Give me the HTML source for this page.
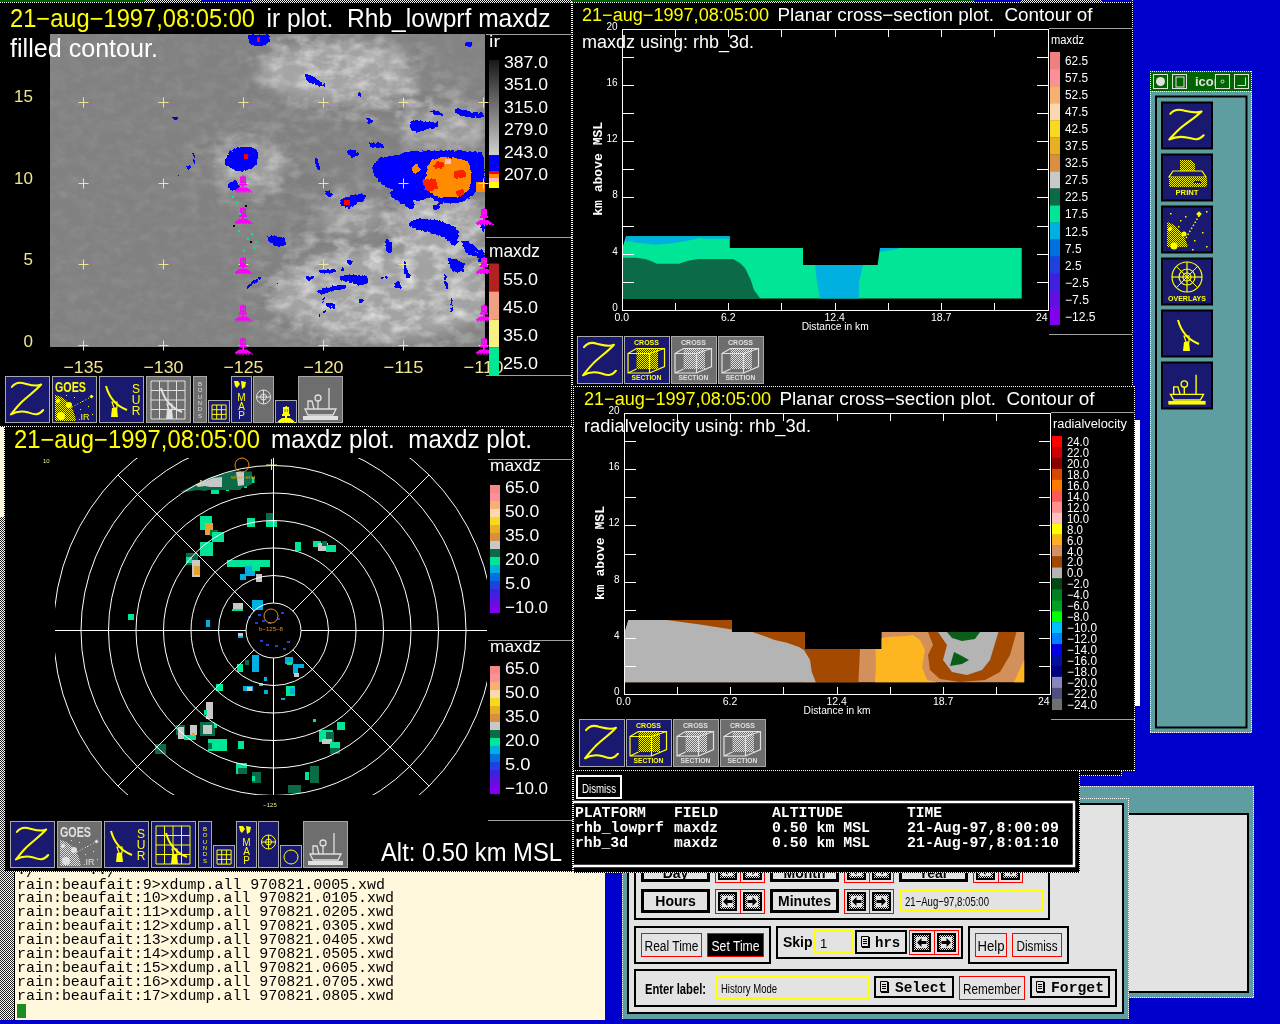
<!DOCTYPE html><html><head><meta charset="utf-8"><style>html,body{margin:0;padding:0;background:#0000cd;overflow:hidden;width:1280px;height:1024px}svg{display:block;will-change:transform} text{white-space:pre}</style></head><body>
<svg xml:space="preserve" width="1280" height="1024" viewBox="0 0 1280 1024">
<defs><filter id="blur4" x="-50%" y="-50%" width="200%" height="200%"><feGaussianBlur stdDeviation="6"/></filter><filter id="blur2" x="-50%" y="-50%" width="200%" height="200%"><feGaussianBlur stdDeviation="2.5"/></filter><clipPath id="satclip"><rect x="50" y="34" width="435" height="313"/></clipPath><clipPath id="radclip"><rect x="55" y="458" width="432" height="337"/></clipPath><pattern id="stip" width="2" height="2" patternUnits="userSpaceOnUse"><rect width="2" height="2" fill="#fff8dc"/><rect width="1" height="1" fill="#202020"/><rect x="1" y="1" width="1" height="1" fill="#202020"/></pattern><pattern id="dith" width="2" height="2" patternUnits="userSpaceOnUse"><rect width="2" height="2" fill="#191970"/><rect width="1" height="1" fill="#ffff00"/><rect x="1" y="1" width="1" height="1" fill="#ffff00"/></pattern><pattern id="dithg" width="2" height="2" patternUnits="userSpaceOnUse"><rect width="2" height="2" fill="#6e6e6e"/><rect width="1" height="1" fill="#e0e0e0"/><rect x="1" y="1" width="1" height="1" fill="#e0e0e0"/></pattern><pattern id="chk" width="2" height="2" patternUnits="userSpaceOnUse"><rect width="2" height="2" fill="#000"/><rect width="1" height="1" fill="#fff"/><rect x="1" y="1" width="1" height="1" fill="#fff"/></pattern><pattern id="btnstip" width="2" height="2" patternUnits="userSpaceOnUse"><rect width="2" height="2" fill="#e3e3e3"/><rect width="1" height="1" fill="#000"/><rect x="1" y="1" width="1" height="1" fill="#000"/></pattern></defs>
<rect x="0" y="0" width="1280" height="1024" fill="#0000cd" />
<rect x="0" y="427" width="605" height="594" fill="#fff8dc" />
<rect x="0" y="427" width="14" height="594" fill="url(#stip)" />
<rect x="0" y="427" width="13" height="90" fill="#fff8dc" />
<rect x="14" y="872" width="1" height="149" fill="#000" />
<text x="17" y="888.5" font-family="Liberation Mono" font-size="15" fill="#000" font-weight="normal" text-anchor="start" textLength="368" lengthAdjust="spacingAndGlyphs" >rain:beaufait:9&gt;xdump.all 970821.0005.xwd</text>
<text x="17" y="902.4" font-family="Liberation Mono" font-size="15" fill="#000" font-weight="normal" text-anchor="start" textLength="377" lengthAdjust="spacingAndGlyphs" >rain:beaufait:10&gt;xdump.all 970821.0105.xwd</text>
<text x="17" y="916.3" font-family="Liberation Mono" font-size="15" fill="#000" font-weight="normal" text-anchor="start" textLength="377" lengthAdjust="spacingAndGlyphs" >rain:beaufait:11&gt;xdump.all 970821.0205.xwd</text>
<text x="17" y="930.2" font-family="Liberation Mono" font-size="15" fill="#000" font-weight="normal" text-anchor="start" textLength="377" lengthAdjust="spacingAndGlyphs" >rain:beaufait:12&gt;xdump.all 970821.0305.xwd</text>
<text x="17" y="944.1" font-family="Liberation Mono" font-size="15" fill="#000" font-weight="normal" text-anchor="start" textLength="377" lengthAdjust="spacingAndGlyphs" >rain:beaufait:13&gt;xdump.all 970821.0405.xwd</text>
<text x="17" y="958.0" font-family="Liberation Mono" font-size="15" fill="#000" font-weight="normal" text-anchor="start" textLength="377" lengthAdjust="spacingAndGlyphs" >rain:beaufait:14&gt;xdump.all 970821.0505.xwd</text>
<text x="17" y="971.9" font-family="Liberation Mono" font-size="15" fill="#000" font-weight="normal" text-anchor="start" textLength="377" lengthAdjust="spacingAndGlyphs" >rain:beaufait:15&gt;xdump.all 970821.0605.xwd</text>
<text x="17" y="985.8" font-family="Liberation Mono" font-size="15" fill="#000" font-weight="normal" text-anchor="start" textLength="377" lengthAdjust="spacingAndGlyphs" >rain:beaufait:16&gt;xdump.all 970821.0705.xwd</text>
<text x="17" y="999.7" font-family="Liberation Mono" font-size="15" fill="#000" font-weight="normal" text-anchor="start" textLength="377" lengthAdjust="spacingAndGlyphs" >rain:beaufait:17&gt;xdump.all 970821.0805.xwd</text>
<text x="17" y="877" font-family="Liberation Mono" font-size="15" fill="#000" font-weight="normal" text-anchor="start" >·/      ··/</text>
<rect x="17" y="1004" width="9" height="14" fill="#1e8c1e" />
<rect x="0" y="1020" width="1280" height="4" fill="#0000cd" />
<rect x="1060" y="786" width="194" height="212" fill="#5f9ea0" />
<line x1="1060" y1="786.5" x2="1254" y2="786.5" stroke="#fff" stroke-width="1" stroke-dasharray="1 1" shape-rendering="crispEdges"/>
<line x1="1253.5" y1="786" x2="1253.5" y2="998" stroke="#fff" stroke-width="1" stroke-dasharray="1 1" shape-rendering="crispEdges"/>
<line x1="1060" y1="997.5" x2="1254" y2="997.5" stroke="#fff" stroke-width="1" stroke-dasharray="1 1" shape-rendering="crispEdges"/>
<rect x="1060" y="813" width="189" height="180" fill="#000" />
<rect x="1060" y="815" width="187" height="176" fill="#e3e3e3" />
<rect x="622" y="798" width="507" height="221" fill="#5f9ea0" />
<line x1="622" y1="798.5" x2="1129" y2="798.5" stroke="#fff" stroke-width="1" stroke-dasharray="1 1" shape-rendering="crispEdges"/>
<line x1="1128.5" y1="798" x2="1128.5" y2="1019" stroke="#fff" stroke-width="1" stroke-dasharray="1 1" shape-rendering="crispEdges"/>
<line x1="622.5" y1="798" x2="622.5" y2="1019" stroke="#fff" stroke-width="1" stroke-dasharray="1 1" shape-rendering="crispEdges"/>
<rect x="627" y="803" width="497" height="211" fill="#000" />
<rect x="629" y="805" width="493" height="207" fill="#e3e3e3" />
<rect x="634" y="830" width="416" height="90" fill="#000" />
<rect x="636" y="832" width="412" height="86" fill="#e3e3e3" />
<rect x="641" y="862" width="69" height="20" fill="#000" />
<rect x="644" y="865" width="63" height="14" fill="#e3e3e3" />
<text x="675.5" y="878" font-family="Liberation Sans" font-size="14" fill="#000" font-weight="bold" text-anchor="middle" >Day</text>
<rect x="715.5" y="858.5" width="49" height="24" fill="none" stroke="#ff0000" stroke-width="1"/>
<rect x="740.5" y="858.5" width="24" height="24" fill="none" stroke="#ff0000" stroke-width="1"/>
<rect x="718" y="861" width="19" height="19" fill="#000" />
<rect x="720" y="863" width="15" height="15" fill="url(#btnstip)" />
<rect x="722" y="865" width="11" height="11" fill="#e3e3e3" />
<path d="M723,870.5 l4.5,-4.5 l0,3 l5,0 l0,3 l-5,0 l0,3 Z" fill="#000"/>
<rect x="743" y="861" width="19" height="19" fill="#000" />
<rect x="745" y="863" width="15" height="15" fill="url(#btnstip)" />
<rect x="747" y="865" width="11" height="11" fill="#e3e3e3" />
<path d="M757,870.5 l-4.5,-4.5 l0,3 l-5,0 l0,3 l5,0 l0,3 Z" fill="#000"/>
<rect x="770" y="862" width="69" height="20" fill="#000" />
<rect x="773" y="865" width="63" height="14" fill="#e3e3e3" />
<text x="804.5" y="878" font-family="Liberation Sans" font-size="14" fill="#000" font-weight="bold" text-anchor="middle" >Month</text>
<rect x="844.5" y="858.5" width="49" height="24" fill="none" stroke="#ff0000" stroke-width="1"/>
<rect x="869.5" y="858.5" width="24" height="24" fill="none" stroke="#ff0000" stroke-width="1"/>
<rect x="847" y="861" width="19" height="19" fill="#000" />
<rect x="849" y="863" width="15" height="15" fill="url(#btnstip)" />
<rect x="851" y="865" width="11" height="11" fill="#e3e3e3" />
<path d="M852,870.5 l4.5,-4.5 l0,3 l5,0 l0,3 l-5,0 l0,3 Z" fill="#000"/>
<rect x="872" y="861" width="19" height="19" fill="#000" />
<rect x="874" y="863" width="15" height="15" fill="url(#btnstip)" />
<rect x="876" y="865" width="11" height="11" fill="#e3e3e3" />
<path d="M886,870.5 l-4.5,-4.5 l0,3 l-5,0 l0,3 l5,0 l0,3 Z" fill="#000"/>
<rect x="899" y="862" width="69" height="20" fill="#000" />
<rect x="902" y="865" width="63" height="14" fill="#e3e3e3" />
<text x="933.5" y="878" font-family="Liberation Sans" font-size="14" fill="#000" font-weight="bold" text-anchor="middle" >Year</text>
<rect x="973.5" y="858.5" width="49" height="24" fill="none" stroke="#ff0000" stroke-width="1"/>
<rect x="998.5" y="858.5" width="24" height="24" fill="none" stroke="#ff0000" stroke-width="1"/>
<rect x="976" y="861" width="19" height="19" fill="#000" />
<rect x="978" y="863" width="15" height="15" fill="url(#btnstip)" />
<rect x="980" y="865" width="11" height="11" fill="#e3e3e3" />
<path d="M981,870.5 l4.5,-4.5 l0,3 l5,0 l0,3 l-5,0 l0,3 Z" fill="#000"/>
<rect x="1001" y="861" width="19" height="19" fill="#000" />
<rect x="1003" y="863" width="15" height="15" fill="url(#btnstip)" />
<rect x="1005" y="865" width="11" height="11" fill="#e3e3e3" />
<path d="M1015,870.5 l-4.5,-4.5 l0,3 l-5,0 l0,3 l5,0 l0,3 Z" fill="#000"/>
<rect x="641" y="889" width="69" height="24" fill="#000" />
<rect x="644" y="892" width="63" height="18" fill="#e3e3e3" />
<text x="675.5" y="906" font-family="Liberation Sans" font-size="14" fill="#000" font-weight="bold" text-anchor="middle" >Hours</text>
<rect x="715.5" y="889.5" width="49" height="24" fill="none" stroke="#ff0000" stroke-width="1"/>
<rect x="740.5" y="889.5" width="24" height="24" fill="none" stroke="#ff0000" stroke-width="1"/>
<rect x="718" y="892" width="19" height="19" fill="#000" />
<rect x="720" y="894" width="15" height="15" fill="url(#btnstip)" />
<rect x="722" y="896" width="11" height="11" fill="#e3e3e3" />
<path d="M723,901.5 l4.5,-4.5 l0,3 l5,0 l0,3 l-5,0 l0,3 Z" fill="#000"/>
<rect x="743" y="892" width="19" height="19" fill="#000" />
<rect x="745" y="894" width="15" height="15" fill="url(#btnstip)" />
<rect x="747" y="896" width="11" height="11" fill="#e3e3e3" />
<path d="M757,901.5 l-4.5,-4.5 l0,3 l-5,0 l0,3 l5,0 l0,3 Z" fill="#000"/>
<rect x="770" y="889" width="69" height="24" fill="#000" />
<rect x="773" y="892" width="63" height="18" fill="#e3e3e3" />
<text x="804.5" y="906" font-family="Liberation Sans" font-size="14" fill="#000" font-weight="bold" text-anchor="middle" >Minutes</text>
<rect x="844.5" y="889.5" width="49" height="24" fill="none" stroke="#ff0000" stroke-width="1"/>
<rect x="869.5" y="889.5" width="24" height="24" fill="none" stroke="#ff0000" stroke-width="1"/>
<rect x="847" y="892" width="19" height="19" fill="#000" />
<rect x="849" y="894" width="15" height="15" fill="url(#btnstip)" />
<rect x="851" y="896" width="11" height="11" fill="#e3e3e3" />
<path d="M852,901.5 l4.5,-4.5 l0,3 l5,0 l0,3 l-5,0 l0,3 Z" fill="#000"/>
<rect x="872" y="892" width="19" height="19" fill="#000" />
<rect x="874" y="894" width="15" height="15" fill="url(#btnstip)" />
<rect x="876" y="896" width="11" height="11" fill="#e3e3e3" />
<path d="M886,901.5 l-4.5,-4.5 l0,3 l-5,0 l0,3 l5,0 l0,3 Z" fill="#000"/>
<rect x="899" y="889" width="144" height="23" fill="#ffff00" />
<rect x="901" y="891" width="140" height="19" fill="#e3e3e3" />
<text x="905" y="906" font-family="Liberation Sans" font-size="13" fill="#000" font-weight="normal" text-anchor="start" textLength="84" lengthAdjust="spacingAndGlyphs" >21−Aug−97,8:05:00</text>
<rect x="634" y="926" width="137" height="38" fill="#000" />
<rect x="636" y="928" width="133" height="34" fill="#e3e3e3" />
<rect x="641.5" y="933.5" width="60" height="23" fill="none" stroke="#ff0000" stroke-width="1"/>
<text x="671.5" y="951" font-family="Liberation Sans" font-size="14" fill="#000" font-weight="normal" text-anchor="middle" textLength="54" lengthAdjust="spacingAndGlyphs" >Real Time</text>
<rect x="707" y="933" width="57" height="24" fill="#ff0000" />
<rect x="708" y="934" width="55" height="22" fill="#000" />
<text x="735.5" y="951" font-family="Liberation Sans" font-size="14" fill="#fff" font-weight="normal" text-anchor="middle" textLength="48" lengthAdjust="spacingAndGlyphs" >Set Time</text>
<rect x="776" y="926" width="187" height="33" fill="#000" />
<rect x="778" y="928" width="183" height="29" fill="#e3e3e3" />
<text x="783" y="947" font-family="Liberation Sans" font-size="14" fill="#000" font-weight="bold" text-anchor="start" >Skip</text>
<rect x="814" y="930" width="39" height="23" fill="#ffff00" />
<rect x="816" y="932" width="35" height="19" fill="#e3e3e3" />
<text x="820" y="948" font-family="Liberation Sans" font-size="13" fill="#000" font-weight="normal" text-anchor="start" >1</text>
<rect x="855" y="930" width="52" height="24" fill="#000" />
<rect x="857" y="932" width="48" height="20" fill="#e3e3e3" />
<path d="M861.5,936.5 h7 v10 h-7 Z M863,939.5 h4 M863,941.5 h4 M863,943.5 h4" fill="none" stroke="#000" stroke-width="1"/>
<rect x="862" y="947" width="7" height="1" fill="#000" />
<rect x="869" y="937" width="1" height="11" fill="#000" />
<text x="875" y="947" font-family="Liberation Mono" font-size="14" fill="#000" font-weight="bold" text-anchor="start" >hrs</text>
<rect x="909.5" y="930.5" width="49" height="24" fill="none" stroke="#ff0000" stroke-width="1"/>
<rect x="934.5" y="930.5" width="24" height="24" fill="none" stroke="#ff0000" stroke-width="1"/>
<rect x="912" y="933" width="19" height="19" fill="#000" />
<rect x="914" y="935" width="15" height="15" fill="url(#btnstip)" />
<rect x="916" y="937" width="11" height="11" fill="#e3e3e3" />
<path d="M917,942.5 l4.5,-4.5 l0,3 l5,0 l0,3 l-5,0 l0,3 Z" fill="#000"/>
<rect x="937" y="933" width="19" height="19" fill="#000" />
<rect x="939" y="935" width="15" height="15" fill="url(#btnstip)" />
<rect x="941" y="937" width="11" height="11" fill="#e3e3e3" />
<path d="M951,942.5 l-4.5,-4.5 l0,3 l-5,0 l0,3 l5,0 l0,3 Z" fill="#000"/>
<rect x="968" y="926" width="101" height="38" fill="#000" />
<rect x="970" y="928" width="97" height="34" fill="#e3e3e3" />
<rect x="975.5" y="933.5" width="31" height="23" fill="none" stroke="#ff0000" stroke-width="1"/>
<text x="991" y="951" font-family="Liberation Sans" font-size="14" fill="#000" font-weight="normal" text-anchor="middle" textLength="27" lengthAdjust="spacingAndGlyphs" >Help</text>
<rect x="1012.5" y="933.5" width="49" height="23" fill="none" stroke="#ff0000" stroke-width="1"/>
<text x="1037" y="951" font-family="Liberation Sans" font-size="14" fill="#000" font-weight="normal" text-anchor="middle" textLength="41" lengthAdjust="spacingAndGlyphs" >Dismiss</text>
<rect x="634" y="969" width="483" height="38" fill="#000" />
<rect x="636" y="971" width="479" height="34" fill="#e3e3e3" />
<text x="645" y="994" font-family="Liberation Sans" font-size="14" fill="#000" font-weight="bold" text-anchor="start" textLength="61" lengthAdjust="spacingAndGlyphs" >Enter label:</text>
<rect x="715" y="976" width="154" height="24" fill="#ffff00" />
<rect x="717" y="978" width="150" height="20" fill="#e3e3e3" />
<text x="721" y="993" font-family="Liberation Sans" font-size="12" fill="#000" font-weight="normal" text-anchor="start" textLength="56" lengthAdjust="spacingAndGlyphs" >History Mode</text>
<rect x="874" y="976" width="80" height="22" fill="#000" />
<rect x="876" y="978" width="76" height="18" fill="#e3e3e3" />
<path d="M880.5,981.5 h7 v10 h-7 Z M882,984.5 h4 M882,986.5 h4 M882,988.5 h4" fill="none" stroke="#000" stroke-width="1"/>
<rect x="881" y="992" width="7" height="1" fill="#000" />
<rect x="888" y="982" width="1" height="11" fill="#000" />
<text x="895" y="992" font-family="Liberation Mono" font-size="14" fill="#000" font-weight="bold" text-anchor="start" textLength="52" lengthAdjust="spacingAndGlyphs" >Select</text>
<rect x="959.5" y="976.5" width="65" height="23" fill="none" stroke="#ff0000" stroke-width="1"/>
<text x="992" y="994" font-family="Liberation Sans" font-size="14" fill="#000" font-weight="normal" text-anchor="middle" textLength="58" lengthAdjust="spacingAndGlyphs" >Remember</text>
<rect x="1030" y="976" width="80" height="22" fill="#000" />
<rect x="1032" y="978" width="76" height="18" fill="#e3e3e3" />
<path d="M1036.5,981.5 h7 v10 h-7 Z M1038,984.5 h4 M1038,986.5 h4 M1038,988.5 h4" fill="none" stroke="#000" stroke-width="1"/>
<rect x="1037" y="992" width="7" height="1" fill="#000" />
<rect x="1044" y="982" width="1" height="11" fill="#000" />
<text x="1051" y="992" font-family="Liberation Mono" font-size="14" fill="#000" font-weight="bold" text-anchor="start" textLength="53" lengthAdjust="spacingAndGlyphs" >Forget</text>
<rect x="1150" y="71" width="102" height="662" fill="#5f9ea0" />
<rect x="1150" y="71" width="102" height="20" fill="#006400" />
<line x1="1150.5" y1="71" x2="1150.5" y2="733" stroke="#fff" stroke-width="1" stroke-dasharray="1 1" shape-rendering="crispEdges"/>
<line x1="1251.5" y1="71" x2="1251.5" y2="733" stroke="#fff" stroke-width="1" stroke-dasharray="1 1" shape-rendering="crispEdges"/>
<line x1="1150" y1="71.5" x2="1252" y2="71.5" stroke="#fff" stroke-width="1" stroke-dasharray="1 1" shape-rendering="crispEdges"/>
<line x1="1150" y1="732.5" x2="1252" y2="732.5" stroke="#fff" stroke-width="1" stroke-dasharray="1 1" shape-rendering="crispEdges"/>
<line x1="1150" y1="91.5" x2="1252" y2="91.5" stroke="#fff" stroke-width="1" stroke-dasharray="1 1" shape-rendering="crispEdges"/>
<rect x="1153.5" y="74.5" width="14" height="14" fill="none" stroke="#e0e0e0" stroke-width="1"/>
<circle cx="1160.5" cy="81.5" r="4.5" fill="#e0e0e0"/>
<rect x="1172.5" y="74.5" width="14" height="14" fill="none" stroke="#e0e0e0" stroke-width="1"/>
<rect x="1176" y="77" width="8" height="10" fill="none" stroke="#e0e0e0" stroke-width="1"/>
<text x="1195" y="86" font-family="Liberation Sans" font-size="13" fill="#e0e0e0" font-weight="bold" text-anchor="start" >icon</text>
<rect x="1215.5" y="74.5" width="14" height="14" fill="#006400" stroke="#e0e0e0" stroke-width="1"/>
<circle cx="1222.5" cy="81.5" r="1.5" fill="none" stroke="#e0e0e0" stroke-width="1"/>
<rect x="1234.5" y="74.5" width="14" height="14" fill="none" stroke="#e0e0e0" stroke-width="1"/>
<path d="M1237.5,85.5 h8 v-8" fill="none" stroke="#e0e0e0"/>
<rect x="1156" y="96.5" width="90.5" height="631" fill="none" stroke="#000" stroke-width="2"/>
<rect x="1161" y="101.5" width="52" height="48" fill="#000" />
<rect x="1163" y="103.5" width="48" height="44" fill="#191970" />
<rect x="1161" y="153.5" width="52" height="48" fill="#000" />
<rect x="1163" y="155.5" width="48" height="44" fill="#191970" />
<rect x="1161" y="205.5" width="52" height="48" fill="#000" />
<rect x="1163" y="207.5" width="48" height="44" fill="#191970" />
<rect x="1161" y="257.5" width="52" height="48" fill="#000" />
<rect x="1163" y="259.5" width="48" height="44" fill="#191970" />
<rect x="1161" y="309.5" width="52" height="48" fill="#000" />
<rect x="1163" y="311.5" width="48" height="44" fill="#191970" />
<rect x="1161" y="361.5" width="52" height="48" fill="#000" />
<rect x="1163" y="363.5" width="48" height="44" fill="#191970" />
<path d="M1170.3,113.8 C1173.4,110.1 1178.7,109.1 1183.9,110.5 C1190.1,111.9 1196.4,113.8 1201.6,111.5 C1194.3,118.5 1186.0,123.2 1179.7,128.8 C1175.5,132.5 1172.4,136.3 1169.3,139.5 C1175.5,136.3 1181.8,136.3 1188.0,137.7 C1194.3,139.5 1198.5,140.9 1203.7,135.3" fill="none" stroke="#ffff00" stroke-width="2.1" stroke-linecap="round" stroke-linejoin="round"/>
<polygon points="1180,160 1191,160 1195,164 1195,173 1180,173" fill="url(#dith)"/>
<polygon points="1173,171 1202,171 1206,177 1169,177" fill="#191970" stroke="#ffff00" stroke-width="1.2"/>
<rect x="1169" y="177" width="38" height="10" rx="2" fill="url(#dith)"/>
<rect x="1194" y="181" width="7" height="2" fill="#191970" />
<text x="1187" y="195" font-family="Liberation Sans" font-size="8" fill="#ffff00" font-weight="bold" text-anchor="middle" textLength="23" lengthAdjust="spacingAndGlyphs" >PRINT</text>
<path d="M1167,222 Q1182,226 1188,247 L1167,247 Z" fill="url(#dith)"/>
<path d="M1186,238 L1200,214" stroke="#ffff00" stroke-width="1.5" stroke-dasharray="1.5 2"/>
<rect x="1197" y="212" width="4" height="4" fill="#ffff00" transform="rotate(45 1199 214)"/>
<rect x="1170" y="213" width="1.5" height="1.5" fill="#ffff00" />
<rect x="1185" y="216" width="1.5" height="1.5" fill="#ffff00" />
<rect x="1206" y="211" width="1.5" height="1.5" fill="#ffff00" />
<rect x="1178" y="226" width="1.5" height="1.5" fill="#ffff00" />
<rect x="1202" y="232" width="1.5" height="1.5" fill="#ffff00" />
<rect x="1194" y="240" width="1.5" height="1.5" fill="#ffff00" />
<rect x="1206" y="246" width="1.5" height="1.5" fill="#ffff00" />
<rect x="1192" y="249" width="1.5" height="1.5" fill="#ffff00" />
<rect x="1180" y="220" width="1.5" height="1.5" fill="#ffff00" />
<circle cx="1174" cy="246" r="3.5" fill="#ffff00"/><circle cx="1184" cy="234" r="2.5" fill="#ffff00"/><circle cx="1170" cy="229" r="2" fill="#ffff00"/>
<circle cx="1187" cy="277" r="15" fill="none" stroke="#ffff00" stroke-width="1.2"/><circle cx="1187" cy="277" r="8" fill="none" stroke="#ffff00" stroke-width="1.2"/><circle cx="1187" cy="277" r="4" fill="none" stroke="#ffff00" stroke-width="1.2"/>
<line x1="1172" y1="277" x2="1202" y2="277" stroke="#ffff00" stroke-width="1.2" />
<line x1="1187" y1="262" x2="1187" y2="292" stroke="#ffff00" stroke-width="1.2" />
<line x1="1176.5" y1="266.5" x2="1197.5" y2="287.5" stroke="#ffff00" stroke-width="1" />
<line x1="1176.5" y1="287.5" x2="1197.5" y2="266.5" stroke="#ffff00" stroke-width="1" />
<text x="1187" y="301" font-family="Liberation Sans" font-size="7" fill="#ffff00" font-weight="bold" text-anchor="middle" >OVERLAYS</text>
<path d="M1178.0,320.0 Q1183.0,338.0 1199.0,344.0" fill="none" stroke="#ffff00" stroke-width="2.0"/>
<path d="M1184.0,336.0 L1189.0,336.0 L1189.0,342.0 L1186.0,342.0 Z" fill="none" stroke="#ffff00" stroke-width="1.2"/>
<path d="M1184.0,342.0 L1189.0,342.0 L1190.0,351.0 L1183.0,351.0 Z" fill="#ffff00"/>
<path d="M1170.5,394.4 L1203.5,394.4 L1200.3,400.0 L1173.7,400.0 Z" fill="none" stroke="#ffff00" stroke-width="1.4"/>
<path d="M1173.7,394.4 L1173.7,386.9 L1177.9,386.9 L1180.1,394.4" fill="none" stroke="#ffff00" stroke-width="1.4"/>
<circle cx="1184.3" cy="384.1" r="3.2" fill="none" stroke="#ffff00" stroke-width="1.4"/>
<line x1="1184.3" y1="386.9" x2="1184.3" y2="394.4" stroke="#ffff00" stroke-width="1.3866666666666667" />
<line x1="1196.1" y1="374.7" x2="1196.1" y2="394.4" stroke="#ffff00" stroke-width="1.3866666666666667" />
<rect x="1168.3" y="400.9" width="37.3" height="3.7" fill="#ffff00" />
<rect x="572" y="2" width="561" height="384" fill="#000" />
<rect x="572" y="0" width="561" height="2" fill="url(#chk)" />
<rect x="572" y="0" width="163" height="2" fill="#006400" />
<rect x="735" y="0" width="239" height="1" fill="#006400" />
<rect x="974" y="0" width="47" height="2" fill="#0000cd" />
<rect x="1102" y="0" width="30" height="2" fill="#0000cd" />
<line x1="572" y1="2.5" x2="1133" y2="2.5" stroke="#fff" stroke-width="1" stroke-dasharray="1 1" shape-rendering="crispEdges"/>
<line x1="572.5" y1="2" x2="572.5" y2="386" stroke="#fff" stroke-width="1" stroke-dasharray="1 1" shape-rendering="crispEdges"/>
<line x1="1132.5" y1="2" x2="1132.5" y2="386" stroke="#fff" stroke-width="1" stroke-dasharray="1 1" shape-rendering="crispEdges"/>
<text x="582" y="21" font-family="Liberation Sans" font-size="18" fill="#ffff00" font-weight="normal" text-anchor="start" textLength="187" lengthAdjust="spacingAndGlyphs" >21−aug−1997,08:05:00</text>
<text x="777.5" y="21" font-family="Liberation Sans" font-size="18" fill="#fff" font-weight="normal" text-anchor="start" textLength="315" lengthAdjust="spacingAndGlyphs" >Planar cross−section plot.  Contour of</text>
<text x="582" y="47.5" font-family="Liberation Sans" font-size="18" fill="#fff" font-weight="normal" text-anchor="start" textLength="172" lengthAdjust="spacingAndGlyphs" >maxdz using: rhb_3d.</text>
<polygon points="622.7,298.6 622.7,247 626,236.2 729.8,236.2 729.8,247.9 803,247.9 803,265 877.6,265 880,248 1021.7,248 1021.7,298.6" fill="#00e696"/>
<polygon points="626,236.2 729.8,236.2 729.8,238.7 705,238.7 700,237.9 685,241.3 670,243.5 655,244.8 640,243 626,241.3" fill="#00b0e0"/>
<polygon points="880,248 900,248 895,249.5 885,251 880,252" fill="#00b0e0"/>
<polygon points="622.7,298.6 622.7,257.7 636,257.7 645,259 651,261 657,263.7 679,263.7 687,261 698,259 733,259 740,263 745,268 750.8,280 754,290 760.2,298.6" fill="#0b6b47"/>
<polygon points="815,265 863,265 859,282 858.7,298.6 819.9,298.6 817,282" fill="#00b0e0"/>
<rect x="1049" y="28" width="84" height="1" fill="#a0a0a0" />
<rect x="1049" y="334" width="84" height="1" fill="#a0a0a0" />
<text x="1051" y="44" font-family="Liberation Sans" font-size="12" fill="#fff" font-weight="normal" text-anchor="start" textLength="33" lengthAdjust="spacingAndGlyphs" >maxdz</text>
<rect x="1050" y="52.0" width="10" height="17.35" fill="#f08080" />
<rect x="1050" y="69.05" width="10" height="17.35" fill="#fa9098" />
<rect x="1050" y="86.1" width="10" height="17.35" fill="#f8b070" />
<rect x="1050" y="103.15" width="10" height="17.35" fill="#fcd8b0" />
<rect x="1050" y="120.2" width="10" height="17.35" fill="#f8d820" />
<rect x="1050" y="137.25" width="10" height="17.35" fill="#e8b020" />
<rect x="1050" y="154.3" width="10" height="17.35" fill="#d89040" />
<rect x="1050" y="171.35000000000002" width="10" height="17.35" fill="#c8c8c8" />
<rect x="1050" y="188.4" width="10" height="17.35" fill="#0b6b47" />
<rect x="1050" y="205.45000000000002" width="10" height="17.35" fill="#00e696" />
<rect x="1050" y="222.5" width="10" height="17.35" fill="#00b0e0" />
<rect x="1050" y="239.55" width="10" height="17.35" fill="#0070e0" />
<rect x="1050" y="256.6" width="10" height="17.35" fill="#2040e0" />
<rect x="1050" y="273.65" width="10" height="17.35" fill="#4020e0" />
<rect x="1050" y="290.70000000000005" width="10" height="17.35" fill="#6010e0" />
<rect x="1050" y="307.75" width="10" height="17.35" fill="#8000f0" />
<text x="1065" y="65.0" font-family="Liberation Sans" font-size="12" fill="#fff" font-weight="normal" text-anchor="start" textLength="23.0" lengthAdjust="spacingAndGlyphs" >62.5</text>
<text x="1065" y="82.05" font-family="Liberation Sans" font-size="12" fill="#fff" font-weight="normal" text-anchor="start" textLength="23.0" lengthAdjust="spacingAndGlyphs" >57.5</text>
<text x="1065" y="99.1" font-family="Liberation Sans" font-size="12" fill="#fff" font-weight="normal" text-anchor="start" textLength="23.0" lengthAdjust="spacingAndGlyphs" >52.5</text>
<text x="1065" y="116.15" font-family="Liberation Sans" font-size="12" fill="#fff" font-weight="normal" text-anchor="start" textLength="23.0" lengthAdjust="spacingAndGlyphs" >47.5</text>
<text x="1065" y="133.2" font-family="Liberation Sans" font-size="12" fill="#fff" font-weight="normal" text-anchor="start" textLength="23.0" lengthAdjust="spacingAndGlyphs" >42.5</text>
<text x="1065" y="150.25" font-family="Liberation Sans" font-size="12" fill="#fff" font-weight="normal" text-anchor="start" textLength="23.0" lengthAdjust="spacingAndGlyphs" >37.5</text>
<text x="1065" y="167.3" font-family="Liberation Sans" font-size="12" fill="#fff" font-weight="normal" text-anchor="start" textLength="23.0" lengthAdjust="spacingAndGlyphs" >32.5</text>
<text x="1065" y="184.35000000000002" font-family="Liberation Sans" font-size="12" fill="#fff" font-weight="normal" text-anchor="start" textLength="23.0" lengthAdjust="spacingAndGlyphs" >27.5</text>
<text x="1065" y="201.4" font-family="Liberation Sans" font-size="12" fill="#fff" font-weight="normal" text-anchor="start" textLength="23.0" lengthAdjust="spacingAndGlyphs" >22.5</text>
<text x="1065" y="218.45000000000002" font-family="Liberation Sans" font-size="12" fill="#fff" font-weight="normal" text-anchor="start" textLength="23.0" lengthAdjust="spacingAndGlyphs" >17.5</text>
<text x="1065" y="235.5" font-family="Liberation Sans" font-size="12" fill="#fff" font-weight="normal" text-anchor="start" textLength="23.0" lengthAdjust="spacingAndGlyphs" >12.5</text>
<text x="1065" y="252.55" font-family="Liberation Sans" font-size="12" fill="#fff" font-weight="normal" text-anchor="start" textLength="16.5" lengthAdjust="spacingAndGlyphs" >7.5</text>
<text x="1065" y="269.6" font-family="Liberation Sans" font-size="12" fill="#fff" font-weight="normal" text-anchor="start" textLength="16.5" lengthAdjust="spacingAndGlyphs" >2.5</text>
<text x="1065" y="286.65" font-family="Liberation Sans" font-size="12" fill="#fff" font-weight="normal" text-anchor="start" textLength="24.0" lengthAdjust="spacingAndGlyphs" >−2.5</text>
<text x="1065" y="303.70000000000005" font-family="Liberation Sans" font-size="12" fill="#fff" font-weight="normal" text-anchor="start" textLength="24.0" lengthAdjust="spacingAndGlyphs" >−7.5</text>
<text x="1065" y="320.75" font-family="Liberation Sans" font-size="12" fill="#fff" font-weight="normal" text-anchor="start" textLength="30.5" lengthAdjust="spacingAndGlyphs" >−12.5</text>
<path d="M622.2,28.8 L622.2,310.3 L1048.2,310.3 L1048.2,29.3 L621.7,29.3" fill="none" stroke="#fff" stroke-width="1" shape-rendering="crispEdges"/>
<line x1="621.7" y1="57.5" x2="633.7" y2="57.5" stroke="#fff" stroke-width="1" shape-rendering="crispEdges"/>
<line x1="1036.7" y1="57.5" x2="1047.7" y2="57.5" stroke="#fff" stroke-width="1" shape-rendering="crispEdges"/>
<line x1="621.7" y1="85.5" x2="633.7" y2="85.5" stroke="#fff" stroke-width="1" shape-rendering="crispEdges"/>
<line x1="1036.7" y1="85.5" x2="1047.7" y2="85.5" stroke="#fff" stroke-width="1" shape-rendering="crispEdges"/>
<line x1="621.7" y1="113.5" x2="633.7" y2="113.5" stroke="#fff" stroke-width="1" shape-rendering="crispEdges"/>
<line x1="1036.7" y1="113.5" x2="1047.7" y2="113.5" stroke="#fff" stroke-width="1" shape-rendering="crispEdges"/>
<line x1="621.7" y1="141.5" x2="633.7" y2="141.5" stroke="#fff" stroke-width="1" shape-rendering="crispEdges"/>
<line x1="1036.7" y1="141.5" x2="1047.7" y2="141.5" stroke="#fff" stroke-width="1" shape-rendering="crispEdges"/>
<line x1="621.7" y1="169.5" x2="633.7" y2="169.5" stroke="#fff" stroke-width="1" shape-rendering="crispEdges"/>
<line x1="1036.7" y1="169.5" x2="1047.7" y2="169.5" stroke="#fff" stroke-width="1" shape-rendering="crispEdges"/>
<line x1="621.7" y1="197.5" x2="633.7" y2="197.5" stroke="#fff" stroke-width="1" shape-rendering="crispEdges"/>
<line x1="1036.7" y1="197.5" x2="1047.7" y2="197.5" stroke="#fff" stroke-width="1" shape-rendering="crispEdges"/>
<line x1="621.7" y1="226.5" x2="633.7" y2="226.5" stroke="#fff" stroke-width="1" shape-rendering="crispEdges"/>
<line x1="1036.7" y1="226.5" x2="1047.7" y2="226.5" stroke="#fff" stroke-width="1" shape-rendering="crispEdges"/>
<line x1="621.7" y1="254.5" x2="633.7" y2="254.5" stroke="#fff" stroke-width="1" shape-rendering="crispEdges"/>
<line x1="1036.7" y1="254.5" x2="1047.7" y2="254.5" stroke="#fff" stroke-width="1" shape-rendering="crispEdges"/>
<line x1="621.7" y1="282.5" x2="633.7" y2="282.5" stroke="#fff" stroke-width="1" shape-rendering="crispEdges"/>
<line x1="1036.7" y1="282.5" x2="1047.7" y2="282.5" stroke="#fff" stroke-width="1" shape-rendering="crispEdges"/>
<line x1="675.5" y1="302.8" x2="675.5" y2="309.8" stroke="#fff" stroke-width="1" shape-rendering="crispEdges"/>
<line x1="675.5" y1="28.8" x2="675.5" y2="36.8" stroke="#fff" stroke-width="1" shape-rendering="crispEdges"/>
<line x1="728.5" y1="302.8" x2="728.5" y2="309.8" stroke="#fff" stroke-width="1" shape-rendering="crispEdges"/>
<line x1="728.5" y1="28.8" x2="728.5" y2="36.8" stroke="#fff" stroke-width="1" shape-rendering="crispEdges"/>
<line x1="781.5" y1="302.8" x2="781.5" y2="309.8" stroke="#fff" stroke-width="1" shape-rendering="crispEdges"/>
<line x1="781.5" y1="28.8" x2="781.5" y2="36.8" stroke="#fff" stroke-width="1" shape-rendering="crispEdges"/>
<line x1="835.5" y1="302.8" x2="835.5" y2="309.8" stroke="#fff" stroke-width="1" shape-rendering="crispEdges"/>
<line x1="835.5" y1="28.8" x2="835.5" y2="36.8" stroke="#fff" stroke-width="1" shape-rendering="crispEdges"/>
<line x1="888.5" y1="302.8" x2="888.5" y2="309.8" stroke="#fff" stroke-width="1" shape-rendering="crispEdges"/>
<line x1="888.5" y1="28.8" x2="888.5" y2="36.8" stroke="#fff" stroke-width="1" shape-rendering="crispEdges"/>
<line x1="941.5" y1="302.8" x2="941.5" y2="309.8" stroke="#fff" stroke-width="1" shape-rendering="crispEdges"/>
<line x1="941.5" y1="28.8" x2="941.5" y2="36.8" stroke="#fff" stroke-width="1" shape-rendering="crispEdges"/>
<line x1="994.5" y1="302.8" x2="994.5" y2="309.8" stroke="#fff" stroke-width="1" shape-rendering="crispEdges"/>
<line x1="994.5" y1="28.8" x2="994.5" y2="36.8" stroke="#fff" stroke-width="1" shape-rendering="crispEdges"/>
<text x="617.7" y="310.5" font-family="Liberation Sans" font-size="10" fill="#fff" font-weight="normal" text-anchor="end" >0</text>
<text x="617.7" y="254.5" font-family="Liberation Sans" font-size="10" fill="#fff" font-weight="normal" text-anchor="end" >4</text>
<text x="617.7" y="197.5" font-family="Liberation Sans" font-size="10" fill="#fff" font-weight="normal" text-anchor="end" >8</text>
<text x="617.7" y="141.5" font-family="Liberation Sans" font-size="10" fill="#fff" font-weight="normal" text-anchor="end" >12</text>
<text x="617.7" y="85.5" font-family="Liberation Sans" font-size="10" fill="#fff" font-weight="normal" text-anchor="end" >16</text>
<text x="617.7" y="29.5" font-family="Liberation Sans" font-size="10" fill="#fff" font-weight="normal" text-anchor="end" >20</text>
<text x="621.7" y="320.8" font-family="Liberation Sans" font-size="10.5" fill="#fff" font-weight="normal" text-anchor="middle" >0.0</text>
<text x="728.2" y="320.8" font-family="Liberation Sans" font-size="10.5" fill="#fff" font-weight="normal" text-anchor="middle" >6.2</text>
<text x="834.7" y="320.8" font-family="Liberation Sans" font-size="10.5" fill="#fff" font-weight="normal" text-anchor="middle" >12.4</text>
<text x="941.2" y="320.8" font-family="Liberation Sans" font-size="10.5" fill="#fff" font-weight="normal" text-anchor="middle" >18.7</text>
<text x="1047.7" y="320.8" font-family="Liberation Sans" font-size="10.5" fill="#fff" font-weight="normal" text-anchor="end" >24</text>
<text x="801.7" y="329.8" font-family="Liberation Sans" font-size="10" fill="#fff" font-weight="normal" text-anchor="start" textLength="67" lengthAdjust="spacingAndGlyphs" >Distance in km</text>
<text transform="translate(602.2,215.8) rotate(-90)" font-family="Liberation Mono" font-size="13" font-weight="bold" fill="#fff" textLength="94" lengthAdjust="spacingAndGlyphs">km above MSL</text>
<rect x="577" y="336" width="46" height="48" fill="#a8a8a8" />
<rect x="578" y="337" width="44" height="46" fill="#191970" />
<path d="M584.0,347.2 C587.0,343.1 592.0,342.1 597.0,343.7 C603.0,345.2 609.0,347.2 614.0,344.7 C607.0,352.3 599.0,357.4 593.0,363.6 C589.0,367.7 586.0,371.7 583.0,375.3 C589.0,371.7 595.0,371.7 601.0,373.3 C607.0,375.3 611.0,376.9 616.0,370.7" fill="none" stroke="#ffff00" stroke-width="2.0" stroke-linecap="round" stroke-linejoin="round"/>
<rect x="624" y="336" width="46" height="48" fill="#a8a8a8" />
<rect x="625" y="337" width="44" height="46" fill="#191970" />
<text x="646.5" y="344.7" font-family="Liberation Sans" font-size="7.5" fill="#ffff00" font-weight="bold" text-anchor="middle" textLength="25" lengthAdjust="spacingAndGlyphs" >CROSS</text>
<text x="646.5" y="379.7" font-family="Liberation Sans" font-size="7.5" fill="#ffff00" font-weight="bold" text-anchor="middle" textLength="30" lengthAdjust="spacingAndGlyphs" >SECTION</text>
<rect x="636.5" y="348.5" width="21.5" height="20.5" fill="url(#dith)"/>
<path d="M628,353.5 H649.5 V373 H628 Z M636.5,348.5 H664.5 V366.5 L649.5,373 M628,353.5 L636.5,348.5 M664.5,348.5 L649.5,353.5 M628,373 L636.5,369" fill="none" stroke="#ffff00" stroke-width="1.2"/>
<rect x="671" y="336" width="46" height="48" fill="#a8a8a8" />
<rect x="672" y="337" width="44" height="46" fill="#6e6e6e" />
<text x="693.5" y="344.7" font-family="Liberation Sans" font-size="7.5" fill="#e0e0e0" font-weight="bold" text-anchor="middle" textLength="25" lengthAdjust="spacingAndGlyphs" >CROSS</text>
<text x="693.5" y="379.7" font-family="Liberation Sans" font-size="7.5" fill="#e0e0e0" font-weight="bold" text-anchor="middle" textLength="30" lengthAdjust="spacingAndGlyphs" >SECTION</text>
<rect x="683.5" y="348.5" width="21.5" height="20.5" fill="url(#dithg)"/>
<path d="M675,353.5 H696.5 V373 H675 Z M683.5,348.5 H711.5 V366.5 L696.5,373 M675,353.5 L683.5,348.5 M711.5,348.5 L696.5,353.5 M675,373 L683.5,369" fill="none" stroke="#e0e0e0" stroke-width="1.2"/>
<rect x="718" y="336" width="46" height="48" fill="#a8a8a8" />
<rect x="719" y="337" width="44" height="46" fill="#6e6e6e" />
<text x="740.5" y="344.7" font-family="Liberation Sans" font-size="7.5" fill="#e0e0e0" font-weight="bold" text-anchor="middle" textLength="25" lengthAdjust="spacingAndGlyphs" >CROSS</text>
<text x="740.5" y="379.7" font-family="Liberation Sans" font-size="7.5" fill="#e0e0e0" font-weight="bold" text-anchor="middle" textLength="30" lengthAdjust="spacingAndGlyphs" >SECTION</text>
<rect x="730.5" y="348.5" width="21.5" height="20.5" fill="url(#dithg)"/>
<path d="M722,353.5 H743.5 V373 H722 Z M730.5,348.5 H758.5 V366.5 L743.5,373 M722,353.5 L730.5,348.5 M758.5,348.5 L743.5,353.5 M722,373 L730.5,369" fill="none" stroke="#e0e0e0" stroke-width="1.2"/>
<rect x="1135" y="420" width="5" height="286" fill="#fff" />
<rect x="572" y="386" width="563" height="385" fill="#000" />
<line x1="573" y1="386.5" x2="1135" y2="386.5" stroke="#fff" stroke-width="1" stroke-dasharray="1 1" shape-rendering="crispEdges"/>
<line x1="573.5" y1="386" x2="573.5" y2="771" stroke="#fff" stroke-width="1" stroke-dasharray="1 1" shape-rendering="crispEdges"/>
<line x1="1134.5" y1="386" x2="1134.5" y2="771" stroke="#fff" stroke-width="1" stroke-dasharray="1 1" shape-rendering="crispEdges"/>
<line x1="573" y1="770.5" x2="1135" y2="770.5" stroke="#fff" stroke-width="1" stroke-dasharray="1 1" shape-rendering="crispEdges"/>
<text x="584" y="405" font-family="Liberation Sans" font-size="18" fill="#ffff00" font-weight="normal" text-anchor="start" textLength="187" lengthAdjust="spacingAndGlyphs" >21−aug−1997,08:05:00</text>
<text x="779.5" y="405" font-family="Liberation Sans" font-size="18" fill="#fff" font-weight="normal" text-anchor="start" textLength="315" lengthAdjust="spacingAndGlyphs" >Planar cross−section plot.  Contour of</text>
<text x="584" y="431.5" font-family="Liberation Sans" font-size="18" fill="#fff" font-weight="normal" text-anchor="start" textLength="227" lengthAdjust="spacingAndGlyphs" >radialvelocity using: rhb_3d.</text>
<polygon points="625,682.2 625,631 628.4,620 731.9,620 731.9,632 804.9,632 804.9,649 881.6,649 881.6,632 1024.2,632 1024.2,682.2" fill="#d4905a"/>
<polygon points="666.6,620 731.9,620 731.9,632 804.9,632 804.9,649 860,649 858.4,682.2 804,682.2" fill="#a34a00"/>
<polygon points="625,682.2 625,631 628.4,620 666.6,620 700,624.5 731.9,629.5 731.9,632 752.5,632 761,635 774.8,640 786.9,642.7 798.9,647 804,650 810,660 811.8,672 815.8,682.2" fill="#b4b4b4"/>
<polygon points="881.6,649 881.6,638 888,637 905,636 913,635 920,640 925,650 922,667 927,680 937,682.2 875,682.2 876,665 875.5,649" fill="#fdb520"/>
<polygon points="928,632 1016.5,632 1010,655 1000,672 985,680 960,682 940,679 930,670 928,655 933,645" fill="#a34a00"/>
<polygon points="938,632 998.4,632 990,660 982,670 967,675 952,672 943,660 947,645" fill="#b4b4b4"/>
<polygon points="947,632 980,632 975,639 962,641 952,638" fill="#0b5e1a"/>
<polygon points="950,666 954,652 960,655 969,660 962,664" fill="#0b5e1a"/>
<polygon points="1014,682.2 1024.2,660 1024.2,682.2" fill="#fdb520"/>
<rect x="1051" y="412" width="84" height="1" fill="#a0a0a0" />
<rect x="1051" y="719" width="84" height="1" fill="#a0a0a0" />
<text x="1053" y="428" font-family="Liberation Sans" font-size="12" fill="#fff" font-weight="normal" text-anchor="start" textLength="74" lengthAdjust="spacingAndGlyphs" >radialvelocity</text>
<rect x="1052" y="436.0" width="10" height="11.25" fill="#ff0000" />
<rect x="1052" y="446.95" width="10" height="11.25" fill="#d00000" />
<rect x="1052" y="457.9" width="10" height="11.25" fill="#880000" />
<rect x="1052" y="468.85" width="10" height="11.25" fill="#d84800" />
<rect x="1052" y="479.8" width="10" height="11.25" fill="#ff7800" />
<rect x="1052" y="490.75" width="10" height="11.25" fill="#ff5858" />
<rect x="1052" y="501.7" width="10" height="11.25" fill="#ff9090" />
<rect x="1052" y="512.65" width="10" height="11.25" fill="#ffc0c0" />
<rect x="1052" y="523.6" width="10" height="11.25" fill="#ffff00" />
<rect x="1052" y="534.55" width="10" height="11.25" fill="#ffb020" />
<rect x="1052" y="545.5" width="10" height="11.25" fill="#d49060" />
<rect x="1052" y="556.45" width="10" height="11.25" fill="#a04800" />
<rect x="1052" y="567.4" width="10" height="11.25" fill="#b4b4b4" />
<rect x="1052" y="578.35" width="10" height="11.25" fill="#004810" />
<rect x="1052" y="589.3" width="10" height="11.25" fill="#008020" />
<rect x="1052" y="600.25" width="10" height="11.25" fill="#00a020" />
<rect x="1052" y="611.2" width="10" height="11.25" fill="#00ff00" />
<rect x="1052" y="622.15" width="10" height="11.25" fill="#00c0ff" />
<rect x="1052" y="633.1" width="10" height="11.25" fill="#0080ff" />
<rect x="1052" y="644.05" width="10" height="11.25" fill="#0000e0" />
<rect x="1052" y="655.0" width="10" height="11.25" fill="#0010a0" />
<rect x="1052" y="665.95" width="10" height="11.25" fill="#000080" />
<rect x="1052" y="676.9" width="10" height="11.25" fill="#8888b8" />
<rect x="1052" y="687.85" width="10" height="11.25" fill="#505080" />
<rect x="1052" y="698.8" width="10" height="11.25" fill="#707070" />
<text x="1067" y="446.0" font-family="Liberation Sans" font-size="12" fill="#fff" font-weight="normal" text-anchor="start" textLength="22" lengthAdjust="spacingAndGlyphs" >24.0</text>
<text x="1067" y="456.95" font-family="Liberation Sans" font-size="12" fill="#fff" font-weight="normal" text-anchor="start" textLength="22" lengthAdjust="spacingAndGlyphs" >22.0</text>
<text x="1067" y="467.9" font-family="Liberation Sans" font-size="12" fill="#fff" font-weight="normal" text-anchor="start" textLength="22" lengthAdjust="spacingAndGlyphs" >20.0</text>
<text x="1067" y="478.85" font-family="Liberation Sans" font-size="12" fill="#fff" font-weight="normal" text-anchor="start" textLength="22" lengthAdjust="spacingAndGlyphs" >18.0</text>
<text x="1067" y="489.8" font-family="Liberation Sans" font-size="12" fill="#fff" font-weight="normal" text-anchor="start" textLength="22" lengthAdjust="spacingAndGlyphs" >16.0</text>
<text x="1067" y="500.75" font-family="Liberation Sans" font-size="12" fill="#fff" font-weight="normal" text-anchor="start" textLength="22" lengthAdjust="spacingAndGlyphs" >14.0</text>
<text x="1067" y="511.7" font-family="Liberation Sans" font-size="12" fill="#fff" font-weight="normal" text-anchor="start" textLength="22" lengthAdjust="spacingAndGlyphs" >12.0</text>
<text x="1067" y="522.65" font-family="Liberation Sans" font-size="12" fill="#fff" font-weight="normal" text-anchor="start" textLength="22" lengthAdjust="spacingAndGlyphs" >10.0</text>
<text x="1067" y="533.6" font-family="Liberation Sans" font-size="12" fill="#fff" font-weight="normal" text-anchor="start" textLength="16" lengthAdjust="spacingAndGlyphs" >8.0</text>
<text x="1067" y="544.55" font-family="Liberation Sans" font-size="12" fill="#fff" font-weight="normal" text-anchor="start" textLength="16" lengthAdjust="spacingAndGlyphs" >6.0</text>
<text x="1067" y="555.5" font-family="Liberation Sans" font-size="12" fill="#fff" font-weight="normal" text-anchor="start" textLength="16" lengthAdjust="spacingAndGlyphs" >4.0</text>
<text x="1067" y="566.45" font-family="Liberation Sans" font-size="12" fill="#fff" font-weight="normal" text-anchor="start" textLength="16" lengthAdjust="spacingAndGlyphs" >2.0</text>
<text x="1067" y="577.4" font-family="Liberation Sans" font-size="12" fill="#fff" font-weight="normal" text-anchor="start" textLength="16" lengthAdjust="spacingAndGlyphs" >0.0</text>
<text x="1067" y="588.35" font-family="Liberation Sans" font-size="12" fill="#fff" font-weight="normal" text-anchor="start" textLength="22" lengthAdjust="spacingAndGlyphs" >−2.0</text>
<text x="1067" y="599.3" font-family="Liberation Sans" font-size="12" fill="#fff" font-weight="normal" text-anchor="start" textLength="22" lengthAdjust="spacingAndGlyphs" >−4.0</text>
<text x="1067" y="610.25" font-family="Liberation Sans" font-size="12" fill="#fff" font-weight="normal" text-anchor="start" textLength="22" lengthAdjust="spacingAndGlyphs" >−6.0</text>
<text x="1067" y="621.2" font-family="Liberation Sans" font-size="12" fill="#fff" font-weight="normal" text-anchor="start" textLength="22" lengthAdjust="spacingAndGlyphs" >−8.0</text>
<text x="1067" y="632.15" font-family="Liberation Sans" font-size="12" fill="#fff" font-weight="normal" text-anchor="start" textLength="30" lengthAdjust="spacingAndGlyphs" >−10.0</text>
<text x="1067" y="643.1" font-family="Liberation Sans" font-size="12" fill="#fff" font-weight="normal" text-anchor="start" textLength="30" lengthAdjust="spacingAndGlyphs" >−12.0</text>
<text x="1067" y="654.05" font-family="Liberation Sans" font-size="12" fill="#fff" font-weight="normal" text-anchor="start" textLength="30" lengthAdjust="spacingAndGlyphs" >−14.0</text>
<text x="1067" y="665.0" font-family="Liberation Sans" font-size="12" fill="#fff" font-weight="normal" text-anchor="start" textLength="30" lengthAdjust="spacingAndGlyphs" >−16.0</text>
<text x="1067" y="675.95" font-family="Liberation Sans" font-size="12" fill="#fff" font-weight="normal" text-anchor="start" textLength="30" lengthAdjust="spacingAndGlyphs" >−18.0</text>
<text x="1067" y="686.9" font-family="Liberation Sans" font-size="12" fill="#fff" font-weight="normal" text-anchor="start" textLength="30" lengthAdjust="spacingAndGlyphs" >−20.0</text>
<text x="1067" y="697.85" font-family="Liberation Sans" font-size="12" fill="#fff" font-weight="normal" text-anchor="start" textLength="30" lengthAdjust="spacingAndGlyphs" >−22.0</text>
<text x="1067" y="708.8" font-family="Liberation Sans" font-size="12" fill="#fff" font-weight="normal" text-anchor="start" textLength="30" lengthAdjust="spacingAndGlyphs" >−24.0</text>
<path d="M624.1,413.0 L624.1,694.5 L1050.1,694.5 L1050.1,413.5 L623.6,413.5" fill="none" stroke="#fff" stroke-width="1" shape-rendering="crispEdges"/>
<line x1="623.6" y1="441.5" x2="635.6" y2="441.5" stroke="#fff" stroke-width="1" shape-rendering="crispEdges"/>
<line x1="1038.6" y1="441.5" x2="1049.6" y2="441.5" stroke="#fff" stroke-width="1" shape-rendering="crispEdges"/>
<line x1="623.6" y1="469.5" x2="635.6" y2="469.5" stroke="#fff" stroke-width="1" shape-rendering="crispEdges"/>
<line x1="1038.6" y1="469.5" x2="1049.6" y2="469.5" stroke="#fff" stroke-width="1" shape-rendering="crispEdges"/>
<line x1="623.6" y1="497.5" x2="635.6" y2="497.5" stroke="#fff" stroke-width="1" shape-rendering="crispEdges"/>
<line x1="1038.6" y1="497.5" x2="1049.6" y2="497.5" stroke="#fff" stroke-width="1" shape-rendering="crispEdges"/>
<line x1="623.6" y1="525.5" x2="635.6" y2="525.5" stroke="#fff" stroke-width="1" shape-rendering="crispEdges"/>
<line x1="1038.6" y1="525.5" x2="1049.6" y2="525.5" stroke="#fff" stroke-width="1" shape-rendering="crispEdges"/>
<line x1="623.6" y1="554.5" x2="635.6" y2="554.5" stroke="#fff" stroke-width="1" shape-rendering="crispEdges"/>
<line x1="1038.6" y1="554.5" x2="1049.6" y2="554.5" stroke="#fff" stroke-width="1" shape-rendering="crispEdges"/>
<line x1="623.6" y1="582.5" x2="635.6" y2="582.5" stroke="#fff" stroke-width="1" shape-rendering="crispEdges"/>
<line x1="1038.6" y1="582.5" x2="1049.6" y2="582.5" stroke="#fff" stroke-width="1" shape-rendering="crispEdges"/>
<line x1="623.6" y1="610.5" x2="635.6" y2="610.5" stroke="#fff" stroke-width="1" shape-rendering="crispEdges"/>
<line x1="1038.6" y1="610.5" x2="1049.6" y2="610.5" stroke="#fff" stroke-width="1" shape-rendering="crispEdges"/>
<line x1="623.6" y1="638.5" x2="635.6" y2="638.5" stroke="#fff" stroke-width="1" shape-rendering="crispEdges"/>
<line x1="1038.6" y1="638.5" x2="1049.6" y2="638.5" stroke="#fff" stroke-width="1" shape-rendering="crispEdges"/>
<line x1="623.6" y1="666.5" x2="635.6" y2="666.5" stroke="#fff" stroke-width="1" shape-rendering="crispEdges"/>
<line x1="1038.6" y1="666.5" x2="1049.6" y2="666.5" stroke="#fff" stroke-width="1" shape-rendering="crispEdges"/>
<line x1="677.5" y1="687.0" x2="677.5" y2="694.0" stroke="#fff" stroke-width="1" shape-rendering="crispEdges"/>
<line x1="677.5" y1="413.0" x2="677.5" y2="421.0" stroke="#fff" stroke-width="1" shape-rendering="crispEdges"/>
<line x1="730.5" y1="687.0" x2="730.5" y2="694.0" stroke="#fff" stroke-width="1" shape-rendering="crispEdges"/>
<line x1="730.5" y1="413.0" x2="730.5" y2="421.0" stroke="#fff" stroke-width="1" shape-rendering="crispEdges"/>
<line x1="783.5" y1="687.0" x2="783.5" y2="694.0" stroke="#fff" stroke-width="1" shape-rendering="crispEdges"/>
<line x1="783.5" y1="413.0" x2="783.5" y2="421.0" stroke="#fff" stroke-width="1" shape-rendering="crispEdges"/>
<line x1="837.5" y1="687.0" x2="837.5" y2="694.0" stroke="#fff" stroke-width="1" shape-rendering="crispEdges"/>
<line x1="837.5" y1="413.0" x2="837.5" y2="421.0" stroke="#fff" stroke-width="1" shape-rendering="crispEdges"/>
<line x1="890.5" y1="687.0" x2="890.5" y2="694.0" stroke="#fff" stroke-width="1" shape-rendering="crispEdges"/>
<line x1="890.5" y1="413.0" x2="890.5" y2="421.0" stroke="#fff" stroke-width="1" shape-rendering="crispEdges"/>
<line x1="943.5" y1="687.0" x2="943.5" y2="694.0" stroke="#fff" stroke-width="1" shape-rendering="crispEdges"/>
<line x1="943.5" y1="413.0" x2="943.5" y2="421.0" stroke="#fff" stroke-width="1" shape-rendering="crispEdges"/>
<line x1="996.5" y1="687.0" x2="996.5" y2="694.0" stroke="#fff" stroke-width="1" shape-rendering="crispEdges"/>
<line x1="996.5" y1="413.0" x2="996.5" y2="421.0" stroke="#fff" stroke-width="1" shape-rendering="crispEdges"/>
<text x="619.6" y="694.5" font-family="Liberation Sans" font-size="10" fill="#fff" font-weight="normal" text-anchor="end" >0</text>
<text x="619.6" y="638.5" font-family="Liberation Sans" font-size="10" fill="#fff" font-weight="normal" text-anchor="end" >4</text>
<text x="619.6" y="582.5" font-family="Liberation Sans" font-size="10" fill="#fff" font-weight="normal" text-anchor="end" >8</text>
<text x="619.6" y="525.5" font-family="Liberation Sans" font-size="10" fill="#fff" font-weight="normal" text-anchor="end" >12</text>
<text x="619.6" y="469.5" font-family="Liberation Sans" font-size="10" fill="#fff" font-weight="normal" text-anchor="end" >16</text>
<text x="619.6" y="413.5" font-family="Liberation Sans" font-size="10" fill="#fff" font-weight="normal" text-anchor="end" >20</text>
<text x="623.6" y="705.0" font-family="Liberation Sans" font-size="10.5" fill="#fff" font-weight="normal" text-anchor="middle" >0.0</text>
<text x="730.1" y="705.0" font-family="Liberation Sans" font-size="10.5" fill="#fff" font-weight="normal" text-anchor="middle" >6.2</text>
<text x="836.6" y="705.0" font-family="Liberation Sans" font-size="10.5" fill="#fff" font-weight="normal" text-anchor="middle" >12.4</text>
<text x="943.1" y="705.0" font-family="Liberation Sans" font-size="10.5" fill="#fff" font-weight="normal" text-anchor="middle" >18.7</text>
<text x="1049.6" y="705.0" font-family="Liberation Sans" font-size="10.5" fill="#fff" font-weight="normal" text-anchor="end" >24</text>
<text x="803.6" y="714.0" font-family="Liberation Sans" font-size="10" fill="#fff" font-weight="normal" text-anchor="start" textLength="67" lengthAdjust="spacingAndGlyphs" >Distance in km</text>
<text transform="translate(604.1,600.0) rotate(-90)" font-family="Liberation Mono" font-size="13" font-weight="bold" fill="#fff" textLength="94" lengthAdjust="spacingAndGlyphs">km above MSL</text>
<rect x="579" y="719" width="46" height="48" fill="#a8a8a8" />
<rect x="580" y="720" width="44" height="46" fill="#191970" />
<path d="M586.0,730.2 C589.0,726.1 594.0,725.1 599.0,726.7 C605.0,728.2 611.0,730.2 616.0,727.7 C609.0,735.3 601.0,740.4 595.0,746.6 C591.0,750.7 588.0,754.7 585.0,758.3 C591.0,754.7 597.0,754.7 603.0,756.3 C609.0,758.3 613.0,759.9 618.0,753.7" fill="none" stroke="#ffff00" stroke-width="2.0" stroke-linecap="round" stroke-linejoin="round"/>
<rect x="626" y="719" width="46" height="48" fill="#a8a8a8" />
<rect x="627" y="720" width="44" height="46" fill="#191970" />
<text x="648.5" y="727.7" font-family="Liberation Sans" font-size="7.5" fill="#ffff00" font-weight="bold" text-anchor="middle" textLength="25" lengthAdjust="spacingAndGlyphs" >CROSS</text>
<text x="648.5" y="762.7" font-family="Liberation Sans" font-size="7.5" fill="#ffff00" font-weight="bold" text-anchor="middle" textLength="30" lengthAdjust="spacingAndGlyphs" >SECTION</text>
<rect x="638.5" y="731.5" width="21.5" height="20.5" fill="url(#dith)"/>
<path d="M630,736.5 H651.5 V756 H630 Z M638.5,731.5 H666.5 V749.5 L651.5,756 M630,736.5 L638.5,731.5 M666.5,731.5 L651.5,736.5 M630,756 L638.5,752" fill="none" stroke="#ffff00" stroke-width="1.2"/>
<rect x="673" y="719" width="46" height="48" fill="#a8a8a8" />
<rect x="674" y="720" width="44" height="46" fill="#6e6e6e" />
<text x="695.5" y="727.7" font-family="Liberation Sans" font-size="7.5" fill="#e0e0e0" font-weight="bold" text-anchor="middle" textLength="25" lengthAdjust="spacingAndGlyphs" >CROSS</text>
<text x="695.5" y="762.7" font-family="Liberation Sans" font-size="7.5" fill="#e0e0e0" font-weight="bold" text-anchor="middle" textLength="30" lengthAdjust="spacingAndGlyphs" >SECTION</text>
<rect x="685.5" y="731.5" width="21.5" height="20.5" fill="url(#dithg)"/>
<path d="M677,736.5 H698.5 V756 H677 Z M685.5,731.5 H713.5 V749.5 L698.5,756 M677,736.5 L685.5,731.5 M713.5,731.5 L698.5,736.5 M677,756 L685.5,752" fill="none" stroke="#e0e0e0" stroke-width="1.2"/>
<rect x="720" y="719" width="46" height="48" fill="#a8a8a8" />
<rect x="721" y="720" width="44" height="46" fill="#6e6e6e" />
<text x="742.5" y="727.7" font-family="Liberation Sans" font-size="7.5" fill="#e0e0e0" font-weight="bold" text-anchor="middle" textLength="25" lengthAdjust="spacingAndGlyphs" >CROSS</text>
<text x="742.5" y="762.7" font-family="Liberation Sans" font-size="7.5" fill="#e0e0e0" font-weight="bold" text-anchor="middle" textLength="30" lengthAdjust="spacingAndGlyphs" >SECTION</text>
<rect x="732.5" y="731.5" width="21.5" height="20.5" fill="url(#dithg)"/>
<path d="M724,736.5 H745.5 V756 H724 Z M732.5,731.5 H760.5 V749.5 L745.5,756 M724,736.5 L732.5,731.5 M760.5,731.5 L745.5,736.5 M724,756 L732.5,752" fill="none" stroke="#e0e0e0" stroke-width="1.2"/>
<rect x="1045" y="771" width="77" height="5" fill="#000" />
<line x1="1045.5" y1="771" x2="1045.5" y2="776" stroke="#fff" stroke-width="1" stroke-dasharray="1 1" shape-rendering="crispEdges"/>
<line x1="1121.5" y1="771" x2="1121.5" y2="776" stroke="#fff" stroke-width="1" stroke-dasharray="1 1" shape-rendering="crispEdges"/>
<line x1="1045" y1="775.5" x2="1122" y2="775.5" stroke="#fff" stroke-width="1" stroke-dasharray="1 1" shape-rendering="crispEdges"/>
<rect x="0" y="2" width="572" height="425" fill="#000" />
<rect x="0" y="0" width="572" height="2" fill="url(#chk)" />
<rect x="0" y="0" width="145" height="2" fill="#006400" />
<rect x="201" y="0" width="51" height="2" fill="#0000cd" />
<line x1="0" y1="2.5" x2="572" y2="2.5" stroke="#fff" stroke-width="1" stroke-dasharray="1 1" shape-rendering="crispEdges"/>
<line x1="571.5" y1="2" x2="571.5" y2="427" stroke="#fff" stroke-width="1" stroke-dasharray="1 1" shape-rendering="crispEdges"/>
<line x1="0" y1="426.5" x2="572" y2="426.5" stroke="#fff" stroke-width="1" stroke-dasharray="1 1" shape-rendering="crispEdges"/>
<defs><filter id="cloudtex" x="50" y="34" width="435" height="313" filterUnits="userSpaceOnUse"><feTurbulence type="fractalNoise" baseFrequency="0.06 0.09" numOctaves="3" seed="11" result="n"/><feColorMatrix in="n" type="matrix" values="0 0 0 0 0.85  0 0 0 0 0.85  0 0 0 0 0.85  1.6 0 0 0 -0.62"/></filter><filter id="finetex" x="50" y="34" width="435" height="313" filterUnits="userSpaceOnUse"><feTurbulence type="fractalNoise" baseFrequency="0.09 0.12" numOctaves="3" seed="5" result="n"/><feColorMatrix in="n" type="matrix" values="0 0 0 0 0.75  0 0 0 0 0.75  0 0 0 0 0.75  2.2 0 0 0 -1.05"/></filter><filter id="bigblur" x="-50%" y="-50%" width="200%" height="200%"><feGaussianBlur stdDeviation="18"/></filter><mask id="cloudmask" maskUnits="userSpaceOnUse" x="50" y="34" width="435" height="313"><rect x="50" y="34" width="435" height="313" fill="#181818"/><g filter="url(#bigblur)"><ellipse cx="345" cy="72" rx="95" ry="38" fill="#fff" transform="rotate(12 345 72)"/><ellipse cx="250" cy="165" rx="45" ry="30" fill="#ddd"/><ellipse cx="445" cy="128" rx="45" ry="25" fill="#ddd"/><ellipse cx="385" cy="295" rx="125" ry="55" fill="#fff"/><ellipse cx="440" cy="225" rx="55" ry="40" fill="#fff"/><ellipse cx="350" cy="215" rx="45" ry="25" fill="#bbb"/><ellipse cx="300" cy="200" rx="28" ry="45" fill="#000"/><ellipse cx="450" cy="62" rx="50" ry="38" fill="#000"/></g></mask></defs>
<g clip-path="url(#satclip)">
<rect x="50" y="34" width="435" height="313" fill="#818181" />
<g filter="url(#blur4)">
<ellipse cx="345" cy="72" rx="85" ry="30" fill="#a4a4a4"/>
<ellipse cx="385" cy="295" rx="110" ry="45" fill="#a2a2a2"/>
<ellipse cx="440" cy="225" rx="45" ry="35" fill="#a4a4a4"/>
<ellipse cx="250" cy="165" rx="35" ry="25" fill="#9c9c9c"/>
<ellipse cx="350" cy="215" rx="35" ry="20" fill="#969696"/>
<ellipse cx="300" cy="200" rx="20" ry="35" fill="#7e7e7e"/>
<ellipse cx="450" cy="62" rx="45" ry="32" fill="#838383"/>
<ellipse cx="445" cy="128" rx="40" ry="20" fill="#9c9c9c"/>
</g>
<rect x="50" y="34" width="435" height="313" fill="#fff" filter="url(#finetex)" opacity="0.09"/>
<rect x="50" y="34" width="435" height="313" fill="#fff" filter="url(#cloudtex)" mask="url(#cloudmask)"/>
<defs><filter id="ragged" x="50" y="34" width="435" height="313" filterUnits="userSpaceOnUse" color-interpolation-filters="sRGB"><feGaussianBlur in="SourceAlpha" stdDeviation="1.6" result="b"/><feTurbulence type="fractalNoise" baseFrequency="0.35" numOctaves="2" seed="4" result="n"/><feComposite in="b" in2="n" operator="arithmetic" k1="0" k2="1" k3="0.9" k4="-0.58" result="c"/><feComponentTransfer in="c" result="t"><feFuncA type="discrete" tableValues="0 1"/></feComponentTransfer><feFlood flood-color="#0000ff"/><feComposite operator="in" in2="t"/></filter></defs>
<defs><filter id="ragO" x="50" y="34" width="435" height="313" filterUnits="userSpaceOnUse" color-interpolation-filters="sRGB"><feGaussianBlur in="SourceAlpha" stdDeviation="1.6" result="b"/><feTurbulence type="fractalNoise" baseFrequency="0.35" numOctaves="2" seed="7" result="n"/><feComposite in="b" in2="n" operator="arithmetic" k1="0" k2="1" k3="0.9" k4="-0.6" result="c"/><feComponentTransfer in="c" result="t"><feFuncA type="discrete" tableValues="0 1"/></feComponentTransfer><feFlood flood-color="#ff8c00"/><feComposite operator="in" in2="t"/></filter></defs>
<defs><filter id="ragR" x="50" y="34" width="435" height="313" filterUnits="userSpaceOnUse" color-interpolation-filters="sRGB"><feGaussianBlur in="SourceAlpha" stdDeviation="1.6" result="b"/><feTurbulence type="fractalNoise" baseFrequency="0.35" numOctaves="2" seed="9" result="n"/><feComposite in="b" in2="n" operator="arithmetic" k1="0" k2="1" k3="0.9" k4="-0.6" result="c"/><feComponentTransfer in="c" result="t"><feFuncA type="discrete" tableValues="0 1"/></feComponentTransfer><feFlood flood-color="#ff2000"/><feComposite operator="in" in2="t"/></filter></defs>
<g filter="url(#ragged)">
<polygon points="247,36 252,34 270,34 271,40 266,46 256,47 249,44" fill="#0000ff"/>
<polygon points="276,34 282,34 281,36 277,36" fill="#0000ff"/>
<polygon points="305,73 312,75 318,80 326,84 328,87 316,86 308,82 305,78" fill="#0000ff"/>
<polygon points="357,91 362,92 363,98 358,97" fill="#0000ff"/>
<polygon points="365,118 372,118 375,124 367,125" fill="#0000ff"/>
<polygon points="428,109 437,110 445,113 443,116 432,115" fill="#0000ff"/>
<polygon points="451,107 462,109 472,112 485,113 485,118 470,118 458,116" fill="#0000ff"/>
<polygon points="409,121 420,120 430,121 441,122 438,128 426,130 418,133 410,131" fill="#0000ff"/>
<polygon points="368,142 380,142 386,145 384,148 370,148" fill="#0000ff"/>
<polygon points="346,149 356,150 361,155 352,158 347,155" fill="#0000ff"/>
<polygon points="314,156 318,158 321,170 317,171 315,164" fill="#0000ff"/>
<polygon points="172,116 178,116 178,121 173,121" fill="#0000ff"/>
<polygon points="192,151 195,152 196,165 193,164" fill="#0000ff"/>
<polygon points="186,165 191,165 191,171 186,170" fill="#0000ff"/>
<polygon points="177,174 181,174 181,177 177,177" fill="#0000ff"/>
<polygon points="224,160 230,150 240,146 252,146 259,152 258,164 250,170 240,173 232,169 226,166" fill="#0000ff"/>
<polygon points="227,182 236,180 241,186 237,191 228,190" fill="#0000ff"/>
<polygon points="339,199 348,196 356,200 357,206 347,209 340,205" fill="#0000ff"/>
<polygon points="323,191 330,190 335,196 328,198" fill="#0000ff"/>
<polygon points="350,195 362,193 368,198 360,203 352,202" fill="#0000ff"/>
<polygon points="372,166 380,157 395,155 410,151 430,150 460,150 480,152 485,156 485,187 478,190 468,200 455,204 440,204 430,198 418,202 405,197 392,190 380,184 374,176" fill="#0000ff"/>
<polygon points="388,192 398,190 408,196 416,205 412,211 402,204 392,198" fill="#0000ff"/>
<polygon points="431,205 440,204 441,210 433,210" fill="#0000ff"/>
<polygon points="408,222 418,218 432,219 445,222 452,225 459,230 458,244 452,246 447,240 438,236 425,232 414,229 409,226" fill="#0000ff"/>
<polygon points="384,240 390,238 393,246 392,254 386,252" fill="#0000ff"/>
<polygon points="446,258 455,258 465,264 464,273 452,272" fill="#0000ff"/>
<polygon points="460,241 468,240 476,246 476,258 466,254" fill="#0000ff"/>
<polygon points="476,249 485,250 485,265 478,262" fill="#0000ff"/>
<polygon points="443,274 447,274 449,291 445,290" fill="#0000ff"/>
<polygon points="402,260 406,260 408,270 412,276 407,280 403,272" fill="#0000ff"/>
<polygon points="393,282 401,281 402,289 395,289" fill="#0000ff"/>
<polygon points="265,236 276,235 287,239 285,247 272,246" fill="#0000ff"/>
<polygon points="316,270 326,268 336,269 336,273 322,274" fill="#0000ff"/>
<polygon points="337,276 350,274 362,275 369,277 368,284 360,286 350,283 340,280" fill="#0000ff"/>
<polygon points="305,276 315,275 314,280 306,281" fill="#0000ff"/>
<polygon points="295,267 297,267 297,273 295,273" fill="#0000ff"/>
<polygon points="340,267 345,267 345,272 340,272" fill="#0000ff"/>
<polygon points="314,292 325,287 338,285 349,284 346,289 335,291 322,295" fill="#0000ff"/>
<polygon points="379,276 388,276 388,279 379,279" fill="#0000ff"/>
<polygon points="275,282 280,282 280,285 275,285" fill="#0000ff"/>
<polygon points="266,282 269,282 269,285 266,285" fill="#0000ff"/>
<polygon points="244,289 250,283 257,278 262,275 262,279 254,285 248,290" fill="#0000ff"/>
<polygon points="322,296 325,296 325,304 322,304" fill="#0000ff"/>
<polygon points="318,300 321,300 321,303 318,303" fill="#0000ff"/>
<polygon points="308,309 313,309 313,311 308,311" fill="#0000ff"/>
<polygon points="326,303 333,301 334,306 327,309" fill="#0000ff"/>
<polygon points="322,310 328,309 327,313 322,314" fill="#0000ff"/>
<polygon points="330,306 336,304 336,309 331,311" fill="#0000ff"/>
<polygon points="318,314 322,314 321,318 318,318" fill="#0000ff"/>
<polygon points="346,260 353,260 353,265 346,265" fill="#0000ff"/>
<polygon points="357,298 364,298 364,303 357,303" fill="#0000ff"/>
<polygon points="450,298 453,298 453,314 450,314" fill="#0000ff"/>
<polygon points="462,44 470,40 474,46 466,48" fill="#0000ff"/>
<polygon points="480,224 485,222 485,232 481,232" fill="#0000ff"/>
</g>
<g filter="url(#ragO)"><polygon points="430,160 445,156 458,158 470,162 472,176 470,190 458,198 440,198 430,194 424,182 426,170" fill="#f00"/><polygon points="411,166 418,163 421,170 416,175 411,172" fill="#f00"/></g>
<g filter="url(#ragR)"><polygon points="432,162 444,161 445,168 434,170" fill="#f00"/><polygon points="452,170 466,170 467,178 454,179" fill="#f00"/><polygon points="421,179 436,178 439,190 425,192" fill="#f00"/><polygon points="455,190 465,189 464,197 456,197" fill="#f00"/></g>
<rect x="445" y="159" width="6" height="5" fill="#ffc0c0" />
<rect x="476" y="182" width="9" height="10" fill="#ff8c00" />
<rect x="244" y="154" width="4" height="5" fill="#ff0000" />
<rect x="344" y="200" width="6" height="5" fill="#ff0000" />
<rect x="257" y="37" width="3" height="5" fill="#ff0000" />
</g>
<line x1="78.5" y1="102.5" x2="88.5" y2="102.5" stroke="#f0e68c" stroke-width="1" />
<line x1="83.5" y1="97.5" x2="83.5" y2="107.5" stroke="#f0e68c" stroke-width="1" />
<line x1="78.5" y1="183.5" x2="88.5" y2="183.5" stroke="#f0e68c" stroke-width="1" />
<line x1="83.5" y1="178.5" x2="83.5" y2="188.5" stroke="#f0e68c" stroke-width="1" />
<line x1="78.5" y1="264.5" x2="88.5" y2="264.5" stroke="#f0e68c" stroke-width="1" />
<line x1="83.5" y1="259.5" x2="83.5" y2="269.5" stroke="#f0e68c" stroke-width="1" />
<line x1="78.5" y1="345.5" x2="88.5" y2="345.5" stroke="#f0e68c" stroke-width="1" />
<line x1="83.5" y1="340.5" x2="83.5" y2="350.5" stroke="#f0e68c" stroke-width="1" />
<line x1="158.5" y1="102.5" x2="168.5" y2="102.5" stroke="#f0e68c" stroke-width="1" />
<line x1="163.5" y1="97.5" x2="163.5" y2="107.5" stroke="#f0e68c" stroke-width="1" />
<line x1="158.5" y1="183.5" x2="168.5" y2="183.5" stroke="#f0e68c" stroke-width="1" />
<line x1="163.5" y1="178.5" x2="163.5" y2="188.5" stroke="#f0e68c" stroke-width="1" />
<line x1="158.5" y1="264.5" x2="168.5" y2="264.5" stroke="#f0e68c" stroke-width="1" />
<line x1="163.5" y1="259.5" x2="163.5" y2="269.5" stroke="#f0e68c" stroke-width="1" />
<line x1="158.5" y1="345.5" x2="168.5" y2="345.5" stroke="#f0e68c" stroke-width="1" />
<line x1="163.5" y1="340.5" x2="163.5" y2="350.5" stroke="#f0e68c" stroke-width="1" />
<line x1="238.5" y1="102.5" x2="248.5" y2="102.5" stroke="#f0e68c" stroke-width="1" />
<line x1="243.5" y1="97.5" x2="243.5" y2="107.5" stroke="#f0e68c" stroke-width="1" />
<line x1="238.5" y1="183.5" x2="248.5" y2="183.5" stroke="#f0e68c" stroke-width="1" />
<line x1="243.5" y1="178.5" x2="243.5" y2="188.5" stroke="#f0e68c" stroke-width="1" />
<line x1="238.5" y1="264.5" x2="248.5" y2="264.5" stroke="#f0e68c" stroke-width="1" />
<line x1="243.5" y1="259.5" x2="243.5" y2="269.5" stroke="#f0e68c" stroke-width="1" />
<line x1="238.5" y1="345.5" x2="248.5" y2="345.5" stroke="#f0e68c" stroke-width="1" />
<line x1="243.5" y1="340.5" x2="243.5" y2="350.5" stroke="#f0e68c" stroke-width="1" />
<line x1="318.5" y1="102.5" x2="328.5" y2="102.5" stroke="#f0e68c" stroke-width="1" />
<line x1="323.5" y1="97.5" x2="323.5" y2="107.5" stroke="#f0e68c" stroke-width="1" />
<line x1="318.5" y1="183.5" x2="328.5" y2="183.5" stroke="#f0e68c" stroke-width="1" />
<line x1="323.5" y1="178.5" x2="323.5" y2="188.5" stroke="#f0e68c" stroke-width="1" />
<line x1="318.5" y1="264.5" x2="328.5" y2="264.5" stroke="#f0e68c" stroke-width="1" />
<line x1="323.5" y1="259.5" x2="323.5" y2="269.5" stroke="#f0e68c" stroke-width="1" />
<line x1="318.5" y1="345.5" x2="328.5" y2="345.5" stroke="#f0e68c" stroke-width="1" />
<line x1="323.5" y1="340.5" x2="323.5" y2="350.5" stroke="#f0e68c" stroke-width="1" />
<line x1="398.5" y1="102.5" x2="408.5" y2="102.5" stroke="#f0e68c" stroke-width="1" />
<line x1="403.5" y1="97.5" x2="403.5" y2="107.5" stroke="#f0e68c" stroke-width="1" />
<line x1="398.5" y1="183.5" x2="408.5" y2="183.5" stroke="#f0e68c" stroke-width="1" />
<line x1="403.5" y1="178.5" x2="403.5" y2="188.5" stroke="#f0e68c" stroke-width="1" />
<line x1="398.5" y1="264.5" x2="408.5" y2="264.5" stroke="#f0e68c" stroke-width="1" />
<line x1="403.5" y1="259.5" x2="403.5" y2="269.5" stroke="#f0e68c" stroke-width="1" />
<line x1="398.5" y1="345.5" x2="408.5" y2="345.5" stroke="#f0e68c" stroke-width="1" />
<line x1="403.5" y1="340.5" x2="403.5" y2="350.5" stroke="#f0e68c" stroke-width="1" />
<line x1="478.5" y1="102.5" x2="488.5" y2="102.5" stroke="#f0e68c" stroke-width="1" />
<line x1="483.5" y1="97.5" x2="483.5" y2="107.5" stroke="#f0e68c" stroke-width="1" />
<line x1="478.5" y1="183.5" x2="488.5" y2="183.5" stroke="#f0e68c" stroke-width="1" />
<line x1="483.5" y1="178.5" x2="483.5" y2="188.5" stroke="#f0e68c" stroke-width="1" />
<line x1="478.5" y1="264.5" x2="488.5" y2="264.5" stroke="#f0e68c" stroke-width="1" />
<line x1="483.5" y1="259.5" x2="483.5" y2="269.5" stroke="#f0e68c" stroke-width="1" />
<line x1="478.5" y1="345.5" x2="488.5" y2="345.5" stroke="#f0e68c" stroke-width="1" />
<line x1="483.5" y1="340.5" x2="483.5" y2="350.5" stroke="#f0e68c" stroke-width="1" />
<text x="33" y="102" font-family="Liberation Sans" font-size="17" fill="#f0e68c" font-weight="normal" text-anchor="end" >15</text>
<text x="33" y="184" font-family="Liberation Sans" font-size="17" fill="#f0e68c" font-weight="normal" text-anchor="end" >10</text>
<text x="33" y="265" font-family="Liberation Sans" font-size="17" fill="#f0e68c" font-weight="normal" text-anchor="end" >5</text>
<text x="33" y="347" font-family="Liberation Sans" font-size="17" fill="#f0e68c" font-weight="normal" text-anchor="end" >0</text>
<text x="83.5" y="372.5" font-family="Liberation Sans" font-size="17" fill="#f0e68c" font-weight="normal" text-anchor="middle" textLength="40" lengthAdjust="spacingAndGlyphs" >−135</text>
<text x="163.5" y="372.5" font-family="Liberation Sans" font-size="17" fill="#f0e68c" font-weight="normal" text-anchor="middle" textLength="40" lengthAdjust="spacingAndGlyphs" >−130</text>
<text x="243.5" y="372.5" font-family="Liberation Sans" font-size="17" fill="#f0e68c" font-weight="normal" text-anchor="middle" textLength="40" lengthAdjust="spacingAndGlyphs" >−125</text>
<text x="323.5" y="372.5" font-family="Liberation Sans" font-size="17" fill="#f0e68c" font-weight="normal" text-anchor="middle" textLength="40" lengthAdjust="spacingAndGlyphs" >−120</text>
<text x="403.5" y="372.5" font-family="Liberation Sans" font-size="17" fill="#f0e68c" font-weight="normal" text-anchor="middle" textLength="40" lengthAdjust="spacingAndGlyphs" >−115</text>
<text x="483.5" y="372.5" font-family="Liberation Sans" font-size="17" fill="#f0e68c" font-weight="normal" text-anchor="middle" textLength="40" lengthAdjust="spacingAndGlyphs" >−110</text>
<rect x="242.5" y="175.5" width="1.5" height="1.5" fill="#ff00ff" />
<rect x="240" y="176.5" width="6" height="7" fill="#ff00ff" />
<rect x="241.5" y="178.5" width="1" height="3" fill="#7a7a7a" />
<rect x="243.8" y="178.5" width="1" height="3" fill="#7a7a7a" />
<rect x="239" y="183.5" width="8" height="2" fill="#ff00ff" />
<rect x="242" y="185.5" width="2" height="2" fill="#ff00ff" />
<polygon points="239,187.5 247,187.5 251,190.5 251,191.5 235,191.5 235,190.5" fill="#ff00ff"/>
<rect x="236" y="191.5" width="2" height="1" fill="#ff00ff" />
<rect x="239" y="191.5" width="2" height="1" fill="#ff00ff" />
<rect x="242" y="191.5" width="2" height="1" fill="#ff00ff" />
<rect x="245" y="191.5" width="2" height="1" fill="#ff00ff" />
<rect x="248" y="191.5" width="2" height="1" fill="#ff00ff" />
<rect x="251" y="191.5" width="2" height="1" fill="#ff00ff" />
<rect x="242.5" y="207" width="1.5" height="1.5" fill="#ff00ff" />
<rect x="240" y="208" width="6" height="7" fill="#ff00ff" />
<rect x="241.5" y="210" width="1" height="3" fill="#7a7a7a" />
<rect x="243.8" y="210" width="1" height="3" fill="#7a7a7a" />
<rect x="239" y="215" width="8" height="2" fill="#ff00ff" />
<rect x="242" y="217" width="2" height="2" fill="#ff00ff" />
<polygon points="239,219 247,219 251,222 251,223 235,223 235,222" fill="#ff00ff"/>
<rect x="236" y="223" width="2" height="1" fill="#ff00ff" />
<rect x="239" y="223" width="2" height="1" fill="#ff00ff" />
<rect x="242" y="223" width="2" height="1" fill="#ff00ff" />
<rect x="245" y="223" width="2" height="1" fill="#ff00ff" />
<rect x="248" y="223" width="2" height="1" fill="#ff00ff" />
<rect x="251" y="223" width="2" height="1" fill="#ff00ff" />
<rect x="242.5" y="257" width="1.5" height="1.5" fill="#ff00ff" />
<rect x="240" y="258" width="6" height="7" fill="#ff00ff" />
<rect x="241.5" y="260" width="1" height="3" fill="#7a7a7a" />
<rect x="243.8" y="260" width="1" height="3" fill="#7a7a7a" />
<rect x="239" y="265" width="8" height="2" fill="#ff00ff" />
<rect x="242" y="267" width="2" height="2" fill="#ff00ff" />
<polygon points="239,269 247,269 251,272 251,273 235,273 235,272" fill="#ff00ff"/>
<rect x="236" y="273" width="2" height="1" fill="#ff00ff" />
<rect x="239" y="273" width="2" height="1" fill="#ff00ff" />
<rect x="242" y="273" width="2" height="1" fill="#ff00ff" />
<rect x="245" y="273" width="2" height="1" fill="#ff00ff" />
<rect x="248" y="273" width="2" height="1" fill="#ff00ff" />
<rect x="251" y="273" width="2" height="1" fill="#ff00ff" />
<rect x="242.5" y="304.5" width="1.5" height="1.5" fill="#ff00ff" />
<rect x="240" y="305.5" width="6" height="7" fill="#ff00ff" />
<rect x="241.5" y="307.5" width="1" height="3" fill="#7a7a7a" />
<rect x="243.8" y="307.5" width="1" height="3" fill="#7a7a7a" />
<rect x="239" y="312.5" width="8" height="2" fill="#ff00ff" />
<rect x="242" y="314.5" width="2" height="2" fill="#ff00ff" />
<polygon points="239,316.5 247,316.5 251,319.5 251,320.5 235,320.5 235,319.5" fill="#ff00ff"/>
<rect x="236" y="320.5" width="2" height="1" fill="#ff00ff" />
<rect x="239" y="320.5" width="2" height="1" fill="#ff00ff" />
<rect x="242" y="320.5" width="2" height="1" fill="#ff00ff" />
<rect x="245" y="320.5" width="2" height="1" fill="#ff00ff" />
<rect x="248" y="320.5" width="2" height="1" fill="#ff00ff" />
<rect x="251" y="320.5" width="2" height="1" fill="#ff00ff" />
<rect x="242.5" y="337.5" width="1.5" height="1.5" fill="#ff00ff" />
<rect x="240" y="338.5" width="6" height="7" fill="#ff00ff" />
<rect x="241.5" y="340.5" width="1" height="3" fill="#7a7a7a" />
<rect x="243.8" y="340.5" width="1" height="3" fill="#7a7a7a" />
<rect x="239" y="345.5" width="8" height="2" fill="#ff00ff" />
<rect x="242" y="347.5" width="2" height="2" fill="#ff00ff" />
<polygon points="239,349.5 247,349.5 251,352.5 251,353.5 235,353.5 235,352.5" fill="#ff00ff"/>
<rect x="236" y="353.5" width="2" height="1" fill="#ff00ff" />
<rect x="239" y="353.5" width="2" height="1" fill="#ff00ff" />
<rect x="242" y="353.5" width="2" height="1" fill="#ff00ff" />
<rect x="245" y="353.5" width="2" height="1" fill="#ff00ff" />
<rect x="248" y="353.5" width="2" height="1" fill="#ff00ff" />
<rect x="251" y="353.5" width="2" height="1" fill="#ff00ff" />
<rect x="483.5" y="208" width="1.5" height="1.5" fill="#ff00ff" />
<rect x="481" y="209" width="6" height="7" fill="#ff00ff" />
<rect x="482.5" y="211" width="1" height="3" fill="#7a7a7a" />
<rect x="484.8" y="211" width="1" height="3" fill="#7a7a7a" />
<rect x="480" y="216" width="8" height="2" fill="#ff00ff" />
<rect x="483" y="218" width="2" height="2" fill="#ff00ff" />
<polygon points="480,220 488,220 492,223 492,224 476,224 476,223" fill="#ff00ff"/>
<rect x="477" y="224" width="2" height="1" fill="#ff00ff" />
<rect x="480" y="224" width="2" height="1" fill="#ff00ff" />
<rect x="483" y="224" width="2" height="1" fill="#ff00ff" />
<rect x="486" y="224" width="2" height="1" fill="#ff00ff" />
<rect x="489" y="224" width="2" height="1" fill="#ff00ff" />
<rect x="492" y="224" width="2" height="1" fill="#ff00ff" />
<rect x="483.5" y="257" width="1.5" height="1.5" fill="#ff00ff" />
<rect x="481" y="258" width="6" height="7" fill="#ff00ff" />
<rect x="482.5" y="260" width="1" height="3" fill="#7a7a7a" />
<rect x="484.8" y="260" width="1" height="3" fill="#7a7a7a" />
<rect x="480" y="265" width="8" height="2" fill="#ff00ff" />
<rect x="483" y="267" width="2" height="2" fill="#ff00ff" />
<polygon points="480,269 488,269 492,272 492,273 476,273 476,272" fill="#ff00ff"/>
<rect x="477" y="273" width="2" height="1" fill="#ff00ff" />
<rect x="480" y="273" width="2" height="1" fill="#ff00ff" />
<rect x="483" y="273" width="2" height="1" fill="#ff00ff" />
<rect x="486" y="273" width="2" height="1" fill="#ff00ff" />
<rect x="489" y="273" width="2" height="1" fill="#ff00ff" />
<rect x="492" y="273" width="2" height="1" fill="#ff00ff" />
<rect x="483.5" y="304.5" width="1.5" height="1.5" fill="#ff00ff" />
<rect x="481" y="305.5" width="6" height="7" fill="#ff00ff" />
<rect x="482.5" y="307.5" width="1" height="3" fill="#7a7a7a" />
<rect x="484.8" y="307.5" width="1" height="3" fill="#7a7a7a" />
<rect x="480" y="312.5" width="8" height="2" fill="#ff00ff" />
<rect x="483" y="314.5" width="2" height="2" fill="#ff00ff" />
<polygon points="480,316.5 488,316.5 492,319.5 492,320.5 476,320.5 476,319.5" fill="#ff00ff"/>
<rect x="477" y="320.5" width="2" height="1" fill="#ff00ff" />
<rect x="480" y="320.5" width="2" height="1" fill="#ff00ff" />
<rect x="483" y="320.5" width="2" height="1" fill="#ff00ff" />
<rect x="486" y="320.5" width="2" height="1" fill="#ff00ff" />
<rect x="489" y="320.5" width="2" height="1" fill="#ff00ff" />
<rect x="492" y="320.5" width="2" height="1" fill="#ff00ff" />
<rect x="483.5" y="337.5" width="1.5" height="1.5" fill="#ff00ff" />
<rect x="481" y="338.5" width="6" height="7" fill="#ff00ff" />
<rect x="482.5" y="340.5" width="1" height="3" fill="#7a7a7a" />
<rect x="484.8" y="340.5" width="1" height="3" fill="#7a7a7a" />
<rect x="480" y="345.5" width="8" height="2" fill="#ff00ff" />
<rect x="483" y="347.5" width="2" height="2" fill="#ff00ff" />
<polygon points="480,349.5 488,349.5 492,352.5 492,353.5 476,353.5 476,352.5" fill="#ff00ff"/>
<rect x="477" y="353.5" width="2" height="1" fill="#ff00ff" />
<rect x="480" y="353.5" width="2" height="1" fill="#ff00ff" />
<rect x="483" y="353.5" width="2" height="1" fill="#ff00ff" />
<rect x="486" y="353.5" width="2" height="1" fill="#ff00ff" />
<rect x="489" y="353.5" width="2" height="1" fill="#ff00ff" />
<rect x="492" y="353.5" width="2" height="1" fill="#ff00ff" />
<rect x="232" y="196" width="2" height="2" fill="#00e896" />
<rect x="236" y="201" width="2" height="2" fill="#00e896" />
<rect x="239" y="213" width="2" height="2" fill="#00e896" />
<rect x="238" y="230" width="2" height="2" fill="#00e896" />
<rect x="251" y="233" width="2" height="2" fill="#00e896" />
<rect x="247" y="238" width="2" height="2" fill="#00e896" />
<rect x="255" y="241" width="2" height="2" fill="#00e896" />
<rect x="243" y="250" width="2" height="2" fill="#00e896" />
<rect x="253" y="247" width="2" height="2" fill="#00e896" />
<rect x="233" y="225" width="2" height="2" fill="#000" />
<rect x="250" y="241" width="2" height="2" fill="#000" />
<rect x="245" y="205" width="2" height="2" fill="#000" />
<text x="10" y="27" font-family="Liberation Sans" font-size="25" fill="#ffff00" font-weight="normal" text-anchor="start" textLength="245" lengthAdjust="spacingAndGlyphs" >21−aug−1997,08:05:00</text>
<text x="266.5" y="27" font-family="Liberation Sans" font-size="25" fill="#fff" font-weight="normal" text-anchor="start" textLength="284" lengthAdjust="spacingAndGlyphs" >ir plot.  Rhb_lowprf maxdz</text>
<text x="10" y="56.5" font-family="Liberation Sans" font-size="25" fill="#fff" font-weight="normal" text-anchor="start" textLength="148" lengthAdjust="spacingAndGlyphs" >filled contour.</text>
<rect x="486" y="34" width="86" height="1" fill="#a0a0a0" />
<text x="489" y="47" font-family="Liberation Sans" font-size="17" fill="#fff" font-weight="normal" text-anchor="start" textLength="11" lengthAdjust="spacingAndGlyphs" >ir</text>
<defs><linearGradient id="irg" x1="0" y1="0" x2="0" y2="1"><stop offset="0" stop-color="#181818"/><stop offset="1" stop-color="#d0d0d0"/></linearGradient></defs>
<rect x="489" y="60" width="10" height="95" fill="url(#irg)" />
<rect x="489" y="155" width="10" height="16" fill="#0000ff" />
<rect x="489" y="171" width="10" height="3" fill="#ff0000" />
<rect x="489" y="174" width="10" height="4" fill="#ff8c00" />
<rect x="489" y="178" width="10" height="4" fill="#ffb6c1" />
<rect x="489" y="182" width="10" height="6" fill="#ffff00" />
<text x="504" y="68.0" font-family="Liberation Sans" font-size="17" fill="#fff" font-weight="normal" text-anchor="start" textLength="44" lengthAdjust="spacingAndGlyphs" >387.0</text>
<text x="504" y="90.4" font-family="Liberation Sans" font-size="17" fill="#fff" font-weight="normal" text-anchor="start" textLength="44" lengthAdjust="spacingAndGlyphs" >351.0</text>
<text x="504" y="112.8" font-family="Liberation Sans" font-size="17" fill="#fff" font-weight="normal" text-anchor="start" textLength="44" lengthAdjust="spacingAndGlyphs" >315.0</text>
<text x="504" y="135.2" font-family="Liberation Sans" font-size="17" fill="#fff" font-weight="normal" text-anchor="start" textLength="44" lengthAdjust="spacingAndGlyphs" >279.0</text>
<text x="504" y="157.6" font-family="Liberation Sans" font-size="17" fill="#fff" font-weight="normal" text-anchor="start" textLength="44" lengthAdjust="spacingAndGlyphs" >243.0</text>
<text x="504" y="180.0" font-family="Liberation Sans" font-size="17" fill="#fff" font-weight="normal" text-anchor="start" textLength="44" lengthAdjust="spacingAndGlyphs" >207.0</text>
<rect x="486" y="237" width="86" height="1" fill="#a0a0a0" />
<rect x="486" y="375" width="86" height="1" fill="#a0a0a0" />
<text x="489" y="257" font-family="Liberation Sans" font-size="18" fill="#fff" font-weight="normal" text-anchor="start" textLength="51" lengthAdjust="spacingAndGlyphs" >maxdz</text>
<rect x="489" y="263.5" width="10" height="28" fill="#b22222" />
<rect x="489" y="291.5" width="10" height="28" fill="#f0a080" />
<rect x="489" y="319.5" width="10" height="28" fill="#f8f080" />
<rect x="489" y="347.5" width="10" height="28" fill="#00e896" />
<text x="503" y="285" font-family="Liberation Sans" font-size="17" fill="#fff" font-weight="normal" text-anchor="start" textLength="35" lengthAdjust="spacingAndGlyphs" >55.0</text>
<text x="503" y="313" font-family="Liberation Sans" font-size="17" fill="#fff" font-weight="normal" text-anchor="start" textLength="35" lengthAdjust="spacingAndGlyphs" >45.0</text>
<text x="503" y="341" font-family="Liberation Sans" font-size="17" fill="#fff" font-weight="normal" text-anchor="start" textLength="35" lengthAdjust="spacingAndGlyphs" >35.0</text>
<text x="503" y="369" font-family="Liberation Sans" font-size="17" fill="#fff" font-weight="normal" text-anchor="start" textLength="35" lengthAdjust="spacingAndGlyphs" >25.0</text>
<rect x="5" y="376" width="45" height="47" fill="#a8a8a8" />
<rect x="6" y="377" width="43" height="45" fill="#191970" />
<path d="M11.8,387.0 C14.8,383.0 19.7,382.0 24.6,383.5 C30.4,385.0 36.3,387.0 41.2,384.5 C34.3,392.0 26.5,397.0 20.7,403.0 C16.7,407.0 13.8,411.0 10.9,414.5 C16.7,411.0 22.6,411.0 28.5,412.5 C34.3,414.5 38.3,416.0 43.2,410.0" fill="none" stroke="#ffff00" stroke-width="2.0" stroke-linecap="round" stroke-linejoin="round"/>
<rect x="52" y="376" width="45" height="47" fill="#a8a8a8" />
<rect x="53" y="377" width="43" height="45" fill="#191970" />
<text x="55" y="392" font-family="Liberation Sans" font-size="15" fill="#ffff00" font-weight="bold" text-anchor="start" textLength="31" lengthAdjust="spacingAndGlyphs" >GOES</text>
<path d="M55,395 Q72,398 76,421 L55,421 Z" fill="url(#dith)"/>
<circle cx="61" cy="416" r="4" fill="#ffff00"/><circle cx="69" cy="405" r="3" fill="#ffff00"/><circle cx="58" cy="401" r="2" fill="#ffff00"/>
<path d="M72,407 L91,397" stroke="#ffff00" stroke-width="1" stroke-dasharray="1 2"/>
<rect x="90" y="395" width="3" height="3" fill="#ffff00" transform="rotate(45 91.5 396.5)"/>
<rect x="74" y="397" width="1" height="1" fill="#ffff00" />
<rect x="82" y="401" width="1" height="1" fill="#ffff00" />
<rect x="88" y="406" width="1" height="1" fill="#ffff00" />
<rect x="80" y="409" width="1" height="1" fill="#ffff00" />
<rect x="66" y="395" width="1" height="1" fill="#ffff00" />
<rect x="92" y="414" width="1" height="1" fill="#ffff00" />
<text x="78" y="420" font-family="Liberation Sans" font-size="9" fill="#ffff00" font-weight="normal" text-anchor="start" >.IR</text>
<rect x="99" y="376" width="45" height="47" fill="#a8a8a8" />
<rect x="100" y="377" width="43" height="45" fill="#191970" />
<path d="M106.0,386.0 Q111.0,404.0 127.0,410.0" fill="none" stroke="#ffff00" stroke-width="2.0"/>
<path d="M112.0,402.0 L117.0,402.0 L117.0,408.0 L114.0,408.0 Z" fill="none" stroke="#ffff00" stroke-width="1.2"/>
<path d="M112.0,408.0 L117.0,408.0 L118.0,417.0 L111.0,417.0 Z" fill="#ffff00"/>
<text x="136" y="393" font-family="Liberation Sans" font-size="12" fill="#ffff00" font-weight="normal" text-anchor="middle" >S</text>
<text x="136" y="404" font-family="Liberation Sans" font-size="12" fill="#ffff00" font-weight="normal" text-anchor="middle" >U</text>
<text x="136" y="415" font-family="Liberation Sans" font-size="12" fill="#ffff00" font-weight="normal" text-anchor="middle" >R</text>
<rect x="146" y="376" width="45" height="47" fill="#a8a8a8" />
<rect x="147" y="377" width="43" height="45" fill="#6e6e6e" />
<line x1="151.0" y1="381" x2="151.0" y2="419" stroke="#e0e0e0" stroke-width="1" />
<line x1="151" y1="381.0" x2="185" y2="381.0" stroke="#e0e0e0" stroke-width="1" />
<line x1="159.5" y1="381" x2="159.5" y2="419" stroke="#e0e0e0" stroke-width="1" />
<line x1="151" y1="390.5" x2="185" y2="390.5" stroke="#e0e0e0" stroke-width="1" />
<line x1="168.0" y1="381" x2="168.0" y2="419" stroke="#e0e0e0" stroke-width="1" />
<line x1="151" y1="400.0" x2="185" y2="400.0" stroke="#e0e0e0" stroke-width="1" />
<line x1="176.5" y1="381" x2="176.5" y2="419" stroke="#e0e0e0" stroke-width="1" />
<line x1="151" y1="409.5" x2="185" y2="409.5" stroke="#e0e0e0" stroke-width="1" />
<line x1="185.0" y1="381" x2="185.0" y2="419" stroke="#e0e0e0" stroke-width="1" />
<line x1="151" y1="419.0" x2="185" y2="419.0" stroke="#e0e0e0" stroke-width="1" />
<path d="M161.0,388.0 Q166.0,406.0 182.0,412.0" fill="none" stroke="#e0e0e0" stroke-width="2.0"/>
<path d="M167.0,404.0 L172.0,404.0 L172.0,410.0 L169.0,410.0 Z" fill="none" stroke="#e0e0e0" stroke-width="1.2"/>
<path d="M167.0,410.0 L172.0,410.0 L173.0,419.0 L166.0,419.0 Z" fill="#e0e0e0"/>
<rect x="193" y="376" width="14" height="47" fill="#a8a8a8" />
<rect x="194" y="377" width="12" height="45" fill="#6e6e6e" />
<text x="200" y="386.0" font-family="Liberation Sans" font-size="6" fill="#e0e0e0" font-weight="normal" text-anchor="middle" >B</text>
<text x="200" y="392.3" font-family="Liberation Sans" font-size="6" fill="#e0e0e0" font-weight="normal" text-anchor="middle" >O</text>
<text x="200" y="398.6" font-family="Liberation Sans" font-size="6" fill="#e0e0e0" font-weight="normal" text-anchor="middle" >U</text>
<text x="200" y="404.9" font-family="Liberation Sans" font-size="6" fill="#e0e0e0" font-weight="normal" text-anchor="middle" >N</text>
<text x="200" y="411.2" font-family="Liberation Sans" font-size="6" fill="#e0e0e0" font-weight="normal" text-anchor="middle" >D</text>
<text x="200" y="417.5" font-family="Liberation Sans" font-size="6" fill="#e0e0e0" font-weight="normal" text-anchor="middle" >S</text>
<rect x="208" y="400" width="22" height="23" fill="#a8a8a8" />
<rect x="209" y="401" width="20" height="21" fill="#191970" />
<line x1="212.0" y1="405" x2="212.0" y2="419" stroke="#ffff00" stroke-width="1" />
<line x1="212" y1="405.0" x2="226" y2="405.0" stroke="#ffff00" stroke-width="1" />
<line x1="216.7" y1="405" x2="216.7" y2="419" stroke="#ffff00" stroke-width="1" />
<line x1="212" y1="409.7" x2="226" y2="409.7" stroke="#ffff00" stroke-width="1" />
<line x1="221.4" y1="405" x2="221.4" y2="419" stroke="#ffff00" stroke-width="1" />
<line x1="212" y1="414.4" x2="226" y2="414.4" stroke="#ffff00" stroke-width="1" />
<line x1="226.1" y1="405" x2="226.1" y2="419" stroke="#ffff00" stroke-width="1" />
<line x1="212" y1="419.1" x2="226" y2="419.1" stroke="#ffff00" stroke-width="1" />
<rect x="231" y="376" width="21" height="47" fill="#a8a8a8" />
<rect x="232" y="377" width="19" height="45" fill="#191970" />
<path d="M234,381 l4,0 l2,3 l-3,4 l-2,-2 Z M241,381 l5,1 l-1,5 l-3,2 Z" fill="#ffff00"/>
<text x="241.5" y="401" font-family="Liberation Sans" font-size="10" fill="#ffff00" font-weight="normal" text-anchor="middle" >M</text>
<text x="241.5" y="410" font-family="Liberation Sans" font-size="10" fill="#ffff00" font-weight="normal" text-anchor="middle" >A</text>
<text x="241.5" y="419" font-family="Liberation Sans" font-size="10" fill="#ffff00" font-weight="normal" text-anchor="middle" >P</text>
<rect x="253" y="376" width="21" height="47" fill="#a8a8a8" />
<rect x="254" y="377" width="19" height="45" fill="#6e6e6e" />
<circle cx="263.5" cy="397" r="7" fill="none" stroke="#e0e0e0" stroke-width="1"/><circle cx="263.5" cy="397" r="3" fill="none" stroke="#e0e0e0" stroke-width="1"/>
<line x1="256" y1="397" x2="271" y2="397" stroke="#e0e0e0" stroke-width="1" />
<line x1="263.5" y1="390" x2="263.5" y2="404" stroke="#e0e0e0" stroke-width="1" />
<rect x="275" y="400" width="22" height="23" fill="#a8a8a8" />
<rect x="276" y="401" width="20" height="21" fill="#191970" />
<rect x="285.5" y="406" width="1.5" height="1.5" fill="#ffff00" />
<rect x="283" y="407" width="6" height="7" fill="#ffff00" />
<rect x="284.5" y="409" width="1" height="3" fill="#7a7a7a" />
<rect x="286.8" y="409" width="1" height="3" fill="#7a7a7a" />
<rect x="282" y="414" width="8" height="2" fill="#ffff00" />
<rect x="285" y="416" width="2" height="2" fill="#ffff00" />
<polygon points="282,418 290,418 294,421 294,422 278,422 278,421" fill="#ffff00"/>
<rect x="279" y="422" width="2" height="1" fill="#ffff00" />
<rect x="282" y="422" width="2" height="1" fill="#ffff00" />
<rect x="285" y="422" width="2" height="1" fill="#ffff00" />
<rect x="288" y="422" width="2" height="1" fill="#ffff00" />
<rect x="291" y="422" width="2" height="1" fill="#ffff00" />
<rect x="294" y="422" width="2" height="1" fill="#ffff00" />
<rect x="298" y="376" width="45" height="47" fill="#a8a8a8" />
<rect x="299" y="377" width="43" height="45" fill="#6e6e6e" />
<path d="M305.0,409.0 L336.0,409.0 L333.0,415.0 L308.0,415.0 Z" fill="none" stroke="#e0e0e0" stroke-width="1.3"/>
<path d="M308.0,409.0 L308.0,401.0 L312.0,401.0 L314.0,409.0" fill="none" stroke="#e0e0e0" stroke-width="1.3"/>
<circle cx="318.0" cy="398.0" r="3.0" fill="none" stroke="#e0e0e0" stroke-width="1.3"/>
<line x1="318.0" y1="401.0" x2="318.0" y2="409.0" stroke="#e0e0e0" stroke-width="1.3" />
<line x1="329.0" y1="388.0" x2="329.0" y2="409.0" stroke="#e0e0e0" stroke-width="1.3" />
<rect x="303.0" y="416.0" width="35.0" height="4.0" fill="#e0e0e0" />
<rect x="4" y="427" width="569" height="445" fill="#000" />
<line x1="4.5" y1="427" x2="4.5" y2="872" stroke="#fff" stroke-width="1" stroke-dasharray="1 1" shape-rendering="crispEdges"/>
<line x1="572.5" y1="427" x2="572.5" y2="872" stroke="#fff" stroke-width="1" stroke-dasharray="1 1" shape-rendering="crispEdges"/>
<line x1="4" y1="871.5" x2="573" y2="871.5" stroke="#fff" stroke-width="1" stroke-dasharray="1 1" shape-rendering="crispEdges"/>
<rect x="211" y="490" width="8" height="4" fill="#00e696" />
<rect x="226" y="488" width="3" height="3" fill="#00e696" />
<rect x="244" y="486" width="3" height="2" fill="#00e696" />
<rect x="251" y="477" width="3.5" height="6" fill="#00e696" />
<rect x="200" y="480" width="2" height="2" fill="#e8a030" />
<rect x="200" y="516" width="12" height="14" fill="#00e696" />
<rect x="205" y="523" width="8" height="12" fill="#e8a030" />
<rect x="210" y="530" width="8" height="6" fill="#0b6b47" />
<rect x="212" y="532" width="12" height="10" fill="#00e696" />
<rect x="200" y="542" width="13" height="14" fill="#00e696" />
<rect x="186" y="553" width="12" height="12" fill="#0b6b47" />
<rect x="186" y="557" width="6" height="6" fill="#00e696" />
<rect x="192" y="560" width="8" height="17" fill="#c8c8c8" />
<rect x="194" y="566" width="6" height="9" fill="#e8a030" />
<rect x="247" y="518" width="8" height="9" fill="#00e696" />
<rect x="266" y="513" width="8" height="8" fill="#0b6b47" />
<rect x="266" y="521" width="11" height="6" fill="#00e696" />
<rect x="227" y="560" width="43" height="7" fill="#00e696" />
<rect x="245" y="566" width="10" height="10" fill="#00b0e0" />
<rect x="252" y="566" width="8" height="5" fill="#00e696" />
<rect x="256" y="574" width="6" height="8" fill="#c8c8c8" />
<rect x="240" y="574" width="6" height="6" fill="#00b0e0" />
<rect x="295" y="542" width="6" height="9" fill="#00e696" />
<rect x="313" y="541" width="8" height="6" fill="#00e696" />
<rect x="318" y="543" width="10" height="8" fill="#c8c8c8" />
<rect x="326" y="545" width="10" height="7" fill="#00e696" />
<rect x="322" y="541" width="5" height="5" fill="#0b6b47" />
<rect x="128" y="614" width="6" height="6" fill="#00e696" />
<rect x="206" y="620" width="4" height="7" fill="#00b0e0" />
<rect x="233" y="603" width="10" height="7" fill="#c8c8c8" />
<rect x="232" y="609" width="11" height="2" fill="#00e696" />
<rect x="252" y="600" width="11" height="10" fill="#00b0e0" />
<rect x="238" y="633" width="5" height="4" fill="#c8c8c8" />
<rect x="238" y="636" width="5" height="2" fill="#00b0e0" />
<rect x="252" y="655" width="7" height="17" fill="#00b0e0" />
<rect x="245" y="660" width="4" height="5" fill="#0b6b47" />
<rect x="237" y="664" width="6" height="8" fill="#00e696" />
<rect x="285" y="657" width="8" height="7" fill="#00b0e0" />
<rect x="287" y="662" width="5" height="3" fill="#00e696" />
<rect x="293" y="664" width="5" height="10" fill="#00b0e0" />
<rect x="294" y="673" width="5" height="4" fill="#c8c8c8" />
<rect x="298" y="664" width="6" height="4" fill="#00b0e0" />
<rect x="264" y="677" width="3" height="4" fill="#00b0e0" />
<rect x="243" y="686" width="10" height="5" fill="#00b0e0" />
<rect x="247" y="687" width="5" height="4" fill="#c8c8c8" />
<rect x="259" y="683" width="4" height="3" fill="#00e696" />
<rect x="264" y="690" width="4" height="4" fill="#00b0e0" />
<rect x="286" y="686" width="9" height="10" fill="#00e696" />
<rect x="290" y="688" width="5" height="6" fill="#00b0e0" />
<rect x="281" y="698" width="4" height="2" fill="#00b0e0" />
<rect x="216" y="684" width="7" height="7" fill="#00e696" />
<rect x="206" y="702" width="7" height="17" fill="#c8c8c8" />
<rect x="204" y="710" width="3" height="5" fill="#00e696" />
<rect x="176" y="725" width="9" height="10" fill="#0b6b47" />
<rect x="178" y="727" width="6" height="12" fill="#c8c8c8" />
<rect x="184" y="735" width="12" height="5" fill="#00e696" />
<rect x="190" y="725" width="7" height="10" fill="#c8c8c8" />
<rect x="192" y="733" width="3" height="3" fill="#e8a030" />
<rect x="200" y="722" width="15" height="14" fill="#0b6b47" />
<rect x="203" y="725" width="9" height="9" fill="#c8c8c8" />
<rect x="214" y="724" width="3" height="4" fill="#00e696" />
<rect x="208" y="739" width="19" height="12" fill="#00e696" />
<rect x="208" y="743" width="4" height="6" fill="#0b6b47" />
<rect x="238" y="741" width="6" height="8" fill="#00e696" />
<rect x="155" y="744" width="11" height="10" fill="#0b6b47" />
<rect x="236" y="763" width="11" height="11" fill="#00e696" />
<rect x="238" y="768" width="9" height="6" fill="#0b6b47" />
<rect x="252" y="772" width="9" height="11" fill="#0b6b47" />
<rect x="252" y="776" width="3" height="5" fill="#00e696" />
<rect x="288" y="785" width="13" height="8" fill="#0b6b47" />
<rect x="310" y="766" width="9" height="17" fill="#0b6b47" />
<rect x="305" y="772" width="4" height="8" fill="#00e696" />
<rect x="319" y="730" width="14" height="12" fill="#00e696" />
<rect x="326" y="732" width="8" height="10" fill="#0b6b47" />
<rect x="322" y="739" width="10" height="5" fill="#c8c8c8" />
<rect x="330" y="742" width="10" height="10" fill="#00e696" />
<rect x="330" y="748" width="10" height="6" fill="#0b6b47" />
<rect x="337" y="722" width="8" height="8" fill="#00e696" />
<rect x="313" y="719" width="3" height="3" fill="#00e696" />
<polygon points="180,492 190,487 200,482 208,478 215,476 222,474 232,471.5 252,471.5 252,484 248,486 243,487 240,490 208,490 205,491 198,490 185,492" fill="#0b6b47"/>
<polygon points="196,485 205,481 213,478 222,477 222,487 210,487 205,486 198,487" fill="#c8c8c8"/>
<polygon points="236,472 244,472 244,485 238,486 237,478" fill="#c8c8c8"/>
<rect x="258" y="614" width="3" height="2" fill="#2040e0" />
<rect x="262" y="620" width="3" height="2" fill="#2040e0" />
<rect x="268" y="622" width="3" height="2" fill="#2040e0" />
<rect x="277" y="618" width="3" height="2" fill="#2040e0" />
<rect x="281" y="612" width="3" height="2" fill="#2040e0" />
<rect x="260" y="640" width="3" height="2" fill="#2040e0" />
<rect x="266" y="644" width="3" height="2" fill="#2040e0" />
<rect x="275" y="645" width="3" height="2" fill="#2040e0" />
<rect x="283" y="648" width="3" height="2" fill="#2040e0" />
<rect x="287" y="641" width="3" height="2" fill="#2040e0" />
<rect x="248" y="616" width="3" height="2" fill="#2040e0" />
<rect x="255" y="622" width="3" height="2" fill="#2040e0" />
<g clip-path="url(#radclip)">
<circle cx="273.5" cy="630.5" r="27.5" fill="none" stroke="#fff" stroke-width="1"/>
<circle cx="273.5" cy="630.5" r="55.0" fill="none" stroke="#fff" stroke-width="1"/>
<circle cx="273.5" cy="630.5" r="82.5" fill="none" stroke="#fff" stroke-width="1"/>
<circle cx="273.5" cy="630.5" r="110.0" fill="none" stroke="#fff" stroke-width="1"/>
<circle cx="273.5" cy="630.5" r="137.5" fill="none" stroke="#fff" stroke-width="1"/>
<circle cx="273.5" cy="630.5" r="165.0" fill="none" stroke="#fff" stroke-width="1"/>
<circle cx="273.5" cy="630.5" r="192.5" fill="none" stroke="#fff" stroke-width="1"/>
<circle cx="273.5" cy="630.5" r="220.0" fill="none" stroke="#fff" stroke-width="1"/>
<line x1="301.0" y1="630.5" x2="493.5" y2="630.5" stroke="#fff" stroke-width="1" />
<line x1="292.9" y1="649.9" x2="429.1" y2="786.1" stroke="#fff" stroke-width="1" />
<line x1="273.5" y1="658.0" x2="273.5" y2="850.5" stroke="#fff" stroke-width="1" />
<line x1="254.1" y1="649.9" x2="117.9" y2="786.1" stroke="#fff" stroke-width="1" />
<line x1="246.0" y1="630.5" x2="53.5" y2="630.5" stroke="#fff" stroke-width="1" />
<line x1="254.1" y1="611.1" x2="117.9" y2="474.9" stroke="#fff" stroke-width="1" />
<line x1="273.5" y1="603.0" x2="273.5" y2="410.5" stroke="#fff" stroke-width="1" />
<line x1="292.9" y1="611.1" x2="429.1" y2="474.9" stroke="#fff" stroke-width="1" />
</g>
<circle cx="242" cy="465" r="7" fill="none" stroke="#e89020" stroke-width="1"/>
<circle cx="271" cy="616" r="7" fill="none" stroke="#e89020" stroke-width="1"/>
<text x="259" y="631" font-family="Liberation Sans" font-size="6" fill="#e89020" font-weight="normal" text-anchor="start" textLength="24" lengthAdjust="spacingAndGlyphs" >b−125−8</text>
<text x="231" y="479" font-family="Liberation Sans" font-size="6" fill="#e8a000" font-weight="normal" text-anchor="start" textLength="24" lengthAdjust="spacingAndGlyphs" >who−emi</text>
<line x1="266" y1="465" x2="277" y2="465" stroke="#f0e68c" stroke-width="1" />
<line x1="271.5" y1="459" x2="271.5" y2="470" stroke="#f0e68c" stroke-width="1" />
<text x="43" y="463" font-family="Liberation Sans" font-size="6" fill="#f0e68c" font-weight="normal" text-anchor="start" >10</text>
<text x="270" y="807" font-family="Liberation Sans" font-size="6" fill="#f0e68c" font-weight="normal" text-anchor="middle" >−125</text>
<text x="14" y="447.5" font-family="Liberation Sans" font-size="25" fill="#ffff00" font-weight="normal" text-anchor="start" textLength="246" lengthAdjust="spacingAndGlyphs" >21−aug−1997,08:05:00</text>
<text x="271" y="447.5" font-family="Liberation Sans" font-size="25" fill="#fff" font-weight="normal" text-anchor="start" textLength="261" lengthAdjust="spacingAndGlyphs" >maxdz plot.  maxdz plot.</text>
<rect x="488" y="459" width="85" height="1" fill="#a0a0a0" />
<text x="490" y="471" font-family="Liberation Sans" font-size="17" fill="#fff" font-weight="normal" text-anchor="start" textLength="51" lengthAdjust="spacingAndGlyphs" >maxdz</text>
<rect x="490" y="485" width="10" height="8.1" fill="#f88888" />
<rect x="490" y="493" width="10" height="8.1" fill="#fa9098" />
<rect x="490" y="501" width="10" height="8.1" fill="#f8b070" />
<rect x="490" y="509" width="10" height="8.1" fill="#fcd8b0" />
<rect x="490" y="517" width="10" height="8.1" fill="#f8d820" />
<rect x="490" y="525" width="10" height="8.1" fill="#e8b020" />
<rect x="490" y="533" width="10" height="8.1" fill="#d89040" />
<rect x="490" y="541" width="10" height="8.1" fill="#c8c8c8" />
<rect x="490" y="549" width="10" height="8.1" fill="#0b6b47" />
<rect x="490" y="557" width="10" height="8.1" fill="#00e696" />
<rect x="490" y="565" width="10" height="8.1" fill="#00b0e0" />
<rect x="490" y="573" width="10" height="8.1" fill="#0070e0" />
<rect x="490" y="581" width="10" height="8.1" fill="#2040e0" />
<rect x="490" y="589" width="10" height="8.1" fill="#4020e0" />
<rect x="490" y="597" width="10" height="8.1" fill="#6010e0" />
<rect x="490" y="605" width="10" height="8.1" fill="#8000f0" />
<text x="505" y="493.0" font-family="Liberation Sans" font-size="17" fill="#fff" font-weight="normal" text-anchor="start" textLength="34.2" lengthAdjust="spacingAndGlyphs" >65.0</text>
<text x="505" y="516.9" font-family="Liberation Sans" font-size="17" fill="#fff" font-weight="normal" text-anchor="start" textLength="34.2" lengthAdjust="spacingAndGlyphs" >50.0</text>
<text x="505" y="540.8" font-family="Liberation Sans" font-size="17" fill="#fff" font-weight="normal" text-anchor="start" textLength="34.2" lengthAdjust="spacingAndGlyphs" >35.0</text>
<text x="505" y="564.7" font-family="Liberation Sans" font-size="17" fill="#fff" font-weight="normal" text-anchor="start" textLength="34.2" lengthAdjust="spacingAndGlyphs" >20.0</text>
<text x="505" y="588.6" font-family="Liberation Sans" font-size="17" fill="#fff" font-weight="normal" text-anchor="start" textLength="25.400000000000002" lengthAdjust="spacingAndGlyphs" >5.0</text>
<text x="505" y="612.5" font-family="Liberation Sans" font-size="17" fill="#fff" font-weight="normal" text-anchor="start" textLength="43.0" lengthAdjust="spacingAndGlyphs" >−10.0</text>
<rect x="488" y="640" width="85" height="1" fill="#a0a0a0" />
<text x="490" y="652" font-family="Liberation Sans" font-size="17" fill="#fff" font-weight="normal" text-anchor="start" textLength="51" lengthAdjust="spacingAndGlyphs" >maxdz</text>
<rect x="490" y="666" width="10" height="8.1" fill="#f88888" />
<rect x="490" y="674" width="10" height="8.1" fill="#fa9098" />
<rect x="490" y="682" width="10" height="8.1" fill="#f8b070" />
<rect x="490" y="690" width="10" height="8.1" fill="#fcd8b0" />
<rect x="490" y="698" width="10" height="8.1" fill="#f8d820" />
<rect x="490" y="706" width="10" height="8.1" fill="#e8b020" />
<rect x="490" y="714" width="10" height="8.1" fill="#d89040" />
<rect x="490" y="722" width="10" height="8.1" fill="#c8c8c8" />
<rect x="490" y="730" width="10" height="8.1" fill="#0b6b47" />
<rect x="490" y="738" width="10" height="8.1" fill="#00e696" />
<rect x="490" y="746" width="10" height="8.1" fill="#00b0e0" />
<rect x="490" y="754" width="10" height="8.1" fill="#0070e0" />
<rect x="490" y="762" width="10" height="8.1" fill="#2040e0" />
<rect x="490" y="770" width="10" height="8.1" fill="#4020e0" />
<rect x="490" y="778" width="10" height="8.1" fill="#6010e0" />
<rect x="490" y="786" width="10" height="8.1" fill="#8000f0" />
<text x="505" y="674.0" font-family="Liberation Sans" font-size="17" fill="#fff" font-weight="normal" text-anchor="start" textLength="34.2" lengthAdjust="spacingAndGlyphs" >65.0</text>
<text x="505" y="697.9" font-family="Liberation Sans" font-size="17" fill="#fff" font-weight="normal" text-anchor="start" textLength="34.2" lengthAdjust="spacingAndGlyphs" >50.0</text>
<text x="505" y="721.8" font-family="Liberation Sans" font-size="17" fill="#fff" font-weight="normal" text-anchor="start" textLength="34.2" lengthAdjust="spacingAndGlyphs" >35.0</text>
<text x="505" y="745.7" font-family="Liberation Sans" font-size="17" fill="#fff" font-weight="normal" text-anchor="start" textLength="34.2" lengthAdjust="spacingAndGlyphs" >20.0</text>
<text x="505" y="769.6" font-family="Liberation Sans" font-size="17" fill="#fff" font-weight="normal" text-anchor="start" textLength="25.400000000000002" lengthAdjust="spacingAndGlyphs" >5.0</text>
<text x="505" y="793.5" font-family="Liberation Sans" font-size="17" fill="#fff" font-weight="normal" text-anchor="start" textLength="43.0" lengthAdjust="spacingAndGlyphs" >−10.0</text>
<rect x="488" y="820" width="85" height="1" fill="#a0a0a0" />
<text x="381" y="860.5" font-family="Liberation Sans" font-size="25" fill="#fff" font-weight="normal" text-anchor="start" textLength="181" lengthAdjust="spacingAndGlyphs" >Alt: 0.50 km MSL</text>
<rect x="10" y="821" width="45" height="47" fill="#a8a8a8" />
<rect x="11" y="822" width="43" height="45" fill="#191970" />
<path d="M16.8,832.0 C19.8,828.0 24.7,827.0 29.6,828.5 C35.4,830.0 41.3,832.0 46.2,829.5 C39.3,837.0 31.5,842.0 25.7,848.0 C21.7,852.0 18.8,856.0 15.9,859.5 C21.7,856.0 27.6,856.0 33.5,857.5 C39.3,859.5 43.3,861.0 48.2,855.0" fill="none" stroke="#ffff00" stroke-width="2.0" stroke-linecap="round" stroke-linejoin="round"/>
<rect x="57" y="821" width="45" height="47" fill="#a8a8a8" />
<rect x="58" y="822" width="43" height="45" fill="#6e6e6e" />
<text x="60" y="837" font-family="Liberation Sans" font-size="15" fill="#e0e0e0" font-weight="bold" text-anchor="start" textLength="31" lengthAdjust="spacingAndGlyphs" >GOES</text>
<path d="M60,840 Q77,843 81,866 L60,866 Z" fill="url(#dithg)"/>
<circle cx="66" cy="861" r="4" fill="#e0e0e0"/><circle cx="74" cy="850" r="3" fill="#e0e0e0"/><circle cx="63" cy="846" r="2" fill="#e0e0e0"/>
<path d="M77,852 L96,842" stroke="#e0e0e0" stroke-width="1" stroke-dasharray="1 2"/>
<rect x="95" y="840" width="3" height="3" fill="#e0e0e0" transform="rotate(45 96.5 841.5)"/>
<rect x="79" y="842" width="1" height="1" fill="#e0e0e0" />
<rect x="87" y="846" width="1" height="1" fill="#e0e0e0" />
<rect x="93" y="851" width="1" height="1" fill="#e0e0e0" />
<rect x="85" y="854" width="1" height="1" fill="#e0e0e0" />
<rect x="71" y="840" width="1" height="1" fill="#e0e0e0" />
<rect x="97" y="859" width="1" height="1" fill="#e0e0e0" />
<text x="83" y="865" font-family="Liberation Sans" font-size="9" fill="#e0e0e0" font-weight="normal" text-anchor="start" >.IR</text>
<rect x="104" y="821" width="45" height="47" fill="#a8a8a8" />
<rect x="105" y="822" width="43" height="45" fill="#191970" />
<path d="M111.0,831.0 Q116.0,849.0 132.0,855.0" fill="none" stroke="#ffff00" stroke-width="2.0"/>
<path d="M117.0,847.0 L122.0,847.0 L122.0,853.0 L119.0,853.0 Z" fill="none" stroke="#ffff00" stroke-width="1.2"/>
<path d="M117.0,853.0 L122.0,853.0 L123.0,862.0 L116.0,862.0 Z" fill="#ffff00"/>
<text x="141" y="838" font-family="Liberation Sans" font-size="12" fill="#ffff00" font-weight="normal" text-anchor="middle" >S</text>
<text x="141" y="849" font-family="Liberation Sans" font-size="12" fill="#ffff00" font-weight="normal" text-anchor="middle" >U</text>
<text x="141" y="860" font-family="Liberation Sans" font-size="12" fill="#ffff00" font-weight="normal" text-anchor="middle" >R</text>
<rect x="151" y="821" width="45" height="47" fill="#a8a8a8" />
<rect x="152" y="822" width="43" height="45" fill="#191970" />
<line x1="156.0" y1="826" x2="156.0" y2="864" stroke="#ffff00" stroke-width="1" />
<line x1="156" y1="826.0" x2="190" y2="826.0" stroke="#ffff00" stroke-width="1" />
<line x1="164.5" y1="826" x2="164.5" y2="864" stroke="#ffff00" stroke-width="1" />
<line x1="156" y1="835.5" x2="190" y2="835.5" stroke="#ffff00" stroke-width="1" />
<line x1="173.0" y1="826" x2="173.0" y2="864" stroke="#ffff00" stroke-width="1" />
<line x1="156" y1="845.0" x2="190" y2="845.0" stroke="#ffff00" stroke-width="1" />
<line x1="181.5" y1="826" x2="181.5" y2="864" stroke="#ffff00" stroke-width="1" />
<line x1="156" y1="854.5" x2="190" y2="854.5" stroke="#ffff00" stroke-width="1" />
<line x1="190.0" y1="826" x2="190.0" y2="864" stroke="#ffff00" stroke-width="1" />
<line x1="156" y1="864.0" x2="190" y2="864.0" stroke="#ffff00" stroke-width="1" />
<path d="M166.0,833.0 Q171.0,851.0 187.0,857.0" fill="none" stroke="#ffff00" stroke-width="2.0"/>
<path d="M172.0,849.0 L177.0,849.0 L177.0,855.0 L174.0,855.0 Z" fill="none" stroke="#ffff00" stroke-width="1.2"/>
<path d="M172.0,855.0 L177.0,855.0 L178.0,864.0 L171.0,864.0 Z" fill="#ffff00"/>
<rect x="198" y="821" width="14" height="47" fill="#a8a8a8" />
<rect x="199" y="822" width="12" height="45" fill="#191970" />
<text x="205" y="831.0" font-family="Liberation Sans" font-size="6" fill="#ffff00" font-weight="normal" text-anchor="middle" >B</text>
<text x="205" y="837.3" font-family="Liberation Sans" font-size="6" fill="#ffff00" font-weight="normal" text-anchor="middle" >O</text>
<text x="205" y="843.6" font-family="Liberation Sans" font-size="6" fill="#ffff00" font-weight="normal" text-anchor="middle" >U</text>
<text x="205" y="849.9" font-family="Liberation Sans" font-size="6" fill="#ffff00" font-weight="normal" text-anchor="middle" >N</text>
<text x="205" y="856.2" font-family="Liberation Sans" font-size="6" fill="#ffff00" font-weight="normal" text-anchor="middle" >D</text>
<text x="205" y="862.5" font-family="Liberation Sans" font-size="6" fill="#ffff00" font-weight="normal" text-anchor="middle" >S</text>
<rect x="213" y="845" width="22" height="23" fill="#a8a8a8" />
<rect x="214" y="846" width="20" height="21" fill="#191970" />
<line x1="217.0" y1="850" x2="217.0" y2="864" stroke="#ffff00" stroke-width="1" />
<line x1="217" y1="850.0" x2="231" y2="850.0" stroke="#ffff00" stroke-width="1" />
<line x1="221.7" y1="850" x2="221.7" y2="864" stroke="#ffff00" stroke-width="1" />
<line x1="217" y1="854.7" x2="231" y2="854.7" stroke="#ffff00" stroke-width="1" />
<line x1="226.4" y1="850" x2="226.4" y2="864" stroke="#ffff00" stroke-width="1" />
<line x1="217" y1="859.4" x2="231" y2="859.4" stroke="#ffff00" stroke-width="1" />
<line x1="231.1" y1="850" x2="231.1" y2="864" stroke="#ffff00" stroke-width="1" />
<line x1="217" y1="864.1" x2="231" y2="864.1" stroke="#ffff00" stroke-width="1" />
<rect x="236" y="821" width="21" height="47" fill="#a8a8a8" />
<rect x="237" y="822" width="19" height="45" fill="#191970" />
<path d="M239,826 l4,0 l2,3 l-3,4 l-2,-2 Z M246,826 l5,1 l-1,5 l-3,2 Z" fill="#ffff00"/>
<text x="246.5" y="846" font-family="Liberation Sans" font-size="10" fill="#ffff00" font-weight="normal" text-anchor="middle" >M</text>
<text x="246.5" y="855" font-family="Liberation Sans" font-size="10" fill="#ffff00" font-weight="normal" text-anchor="middle" >A</text>
<text x="246.5" y="864" font-family="Liberation Sans" font-size="10" fill="#ffff00" font-weight="normal" text-anchor="middle" >P</text>
<rect x="258" y="821" width="21" height="47" fill="#a8a8a8" />
<rect x="259" y="822" width="19" height="45" fill="#191970" />
<circle cx="268.5" cy="842" r="7" fill="none" stroke="#ffff00" stroke-width="1"/><circle cx="268.5" cy="842" r="3" fill="none" stroke="#ffff00" stroke-width="1"/>
<line x1="261" y1="842" x2="276" y2="842" stroke="#ffff00" stroke-width="1" />
<line x1="268.5" y1="835" x2="268.5" y2="849" stroke="#ffff00" stroke-width="1" />
<rect x="280" y="845" width="22" height="23" fill="#a8a8a8" />
<rect x="281" y="846" width="20" height="21" fill="#191970" />
<circle cx="291" cy="857" r="7" fill="none" stroke="#ffff00" stroke-width="1"/>
<rect x="303" y="821" width="45" height="47" fill="#a8a8a8" />
<rect x="304" y="822" width="43" height="45" fill="#6e6e6e" />
<path d="M310.0,854.0 L341.0,854.0 L338.0,860.0 L313.0,860.0 Z" fill="none" stroke="#e0e0e0" stroke-width="1.3"/>
<path d="M313.0,854.0 L313.0,846.0 L317.0,846.0 L319.0,854.0" fill="none" stroke="#e0e0e0" stroke-width="1.3"/>
<circle cx="323.0" cy="843.0" r="3.0" fill="none" stroke="#e0e0e0" stroke-width="1.3"/>
<line x1="323.0" y1="846.0" x2="323.0" y2="854.0" stroke="#e0e0e0" stroke-width="1.3" />
<line x1="334.0" y1="833.0" x2="334.0" y2="854.0" stroke="#e0e0e0" stroke-width="1.3" />
<rect x="308.0" y="861.0" width="35.0" height="4.0" fill="#e0e0e0" />
<rect x="573" y="771" width="507" height="102" fill="#000" />
<line x1="573.5" y1="771" x2="573.5" y2="873" stroke="#fff" stroke-width="1" stroke-dasharray="1 1" shape-rendering="crispEdges"/>
<line x1="1079.5" y1="771" x2="1079.5" y2="873" stroke="#fff" stroke-width="1" stroke-dasharray="1 1" shape-rendering="crispEdges"/>
<line x1="573" y1="872.5" x2="1080" y2="872.5" stroke="#fff" stroke-width="1" stroke-dasharray="1 1" shape-rendering="crispEdges"/>
<rect x="577" y="776" width="44" height="22" fill="none" stroke="#fff" stroke-width="2"/>
<text x="599" y="793" font-family="Liberation Sans" font-size="13" fill="#fff" font-weight="normal" text-anchor="middle" textLength="34" lengthAdjust="spacingAndGlyphs" >Dismiss</text>
<path d="M573,802 L1074,802 L1074,866 L573,866" fill="none" stroke="#fff" stroke-width="2.5"/>
<text x="575" y="816.5" font-family="Liberation Mono" font-size="15" fill="#fff" font-weight="bold" text-anchor="start" textLength="71" lengthAdjust="spacingAndGlyphs" >PLATFORM</text>
<text x="674" y="816.5" font-family="Liberation Mono" font-size="15" fill="#fff" font-weight="bold" text-anchor="start" textLength="44" lengthAdjust="spacingAndGlyphs" >FIELD</text>
<text x="772" y="816.5" font-family="Liberation Mono" font-size="15" fill="#fff" font-weight="bold" text-anchor="start" textLength="71" lengthAdjust="spacingAndGlyphs" >ALTITUDE</text>
<text x="907" y="816.5" font-family="Liberation Mono" font-size="15" fill="#fff" font-weight="bold" text-anchor="start" textLength="35" lengthAdjust="spacingAndGlyphs" >TIME</text>
<text x="575" y="831.5" font-family="Liberation Mono" font-size="15" fill="#fff" font-weight="bold" text-anchor="start" textLength="89" lengthAdjust="spacingAndGlyphs" >rhb_lowprf</text>
<text x="674" y="831.5" font-family="Liberation Mono" font-size="15" fill="#fff" font-weight="bold" text-anchor="start" textLength="44" lengthAdjust="spacingAndGlyphs" >maxdz</text>
<text x="772" y="831.5" font-family="Liberation Mono" font-size="15" fill="#fff" font-weight="bold" text-anchor="start" textLength="98" lengthAdjust="spacingAndGlyphs" >0.50 km MSL</text>
<text x="907" y="831.5" font-family="Liberation Mono" font-size="15" fill="#fff" font-weight="bold" text-anchor="start" textLength="152" lengthAdjust="spacingAndGlyphs" >21-Aug-97,8:00:09</text>
<text x="575" y="846.5" font-family="Liberation Mono" font-size="15" fill="#fff" font-weight="bold" text-anchor="start" textLength="53" lengthAdjust="spacingAndGlyphs" >rhb_3d</text>
<text x="674" y="846.5" font-family="Liberation Mono" font-size="15" fill="#fff" font-weight="bold" text-anchor="start" textLength="44" lengthAdjust="spacingAndGlyphs" >maxdz</text>
<text x="772" y="846.5" font-family="Liberation Mono" font-size="15" fill="#fff" font-weight="bold" text-anchor="start" textLength="98" lengthAdjust="spacingAndGlyphs" >0.50 km MSL</text>
<text x="907" y="846.5" font-family="Liberation Mono" font-size="15" fill="#fff" font-weight="bold" text-anchor="start" textLength="152" lengthAdjust="spacingAndGlyphs" >21-Aug-97,8:01:10</text>
</svg></body></html>
